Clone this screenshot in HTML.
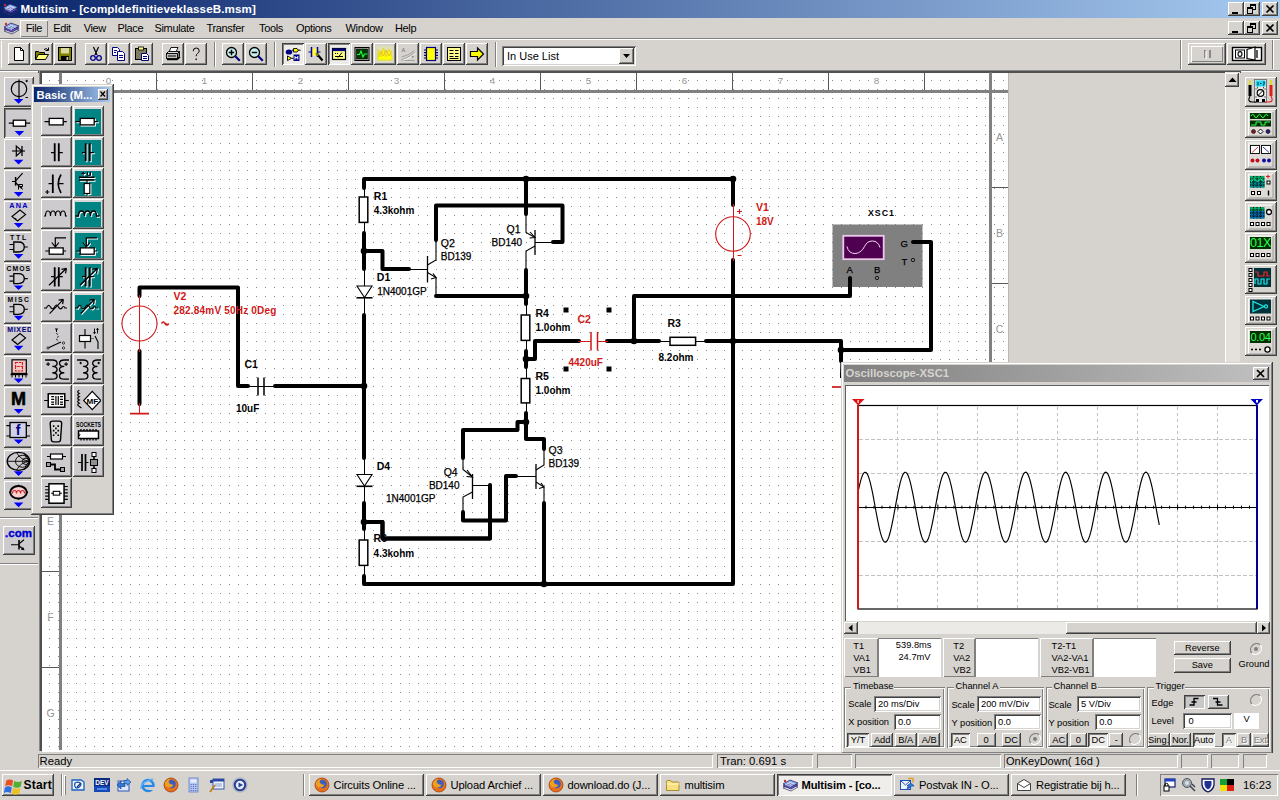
<!DOCTYPE html>
<html lang="nl"><head><meta charset="utf-8"><title>Multisim - [compldefinitieveklasseB.msm]</title>
<style>
html,body{margin:0;padding:0;}
body{width:1280px;height:800px;overflow:hidden;position:relative;background:#d6d3ce;
font-family:"Liberation Sans",sans-serif;font-size:11px;color:#000;}
div,svg{position:absolute;box-sizing:border-box;}
svg{overflow:hidden;}
.t{white-space:nowrap;}
</style></head>
<body>
<div style="left:38px;top:70px;width:1203px;height:684px;background:#d6d3ce;"></div>
<div style="left:38px;top:69.5px;width:1203px;height:3px;background:linear-gradient(#8a8a8a 0,#8a8a8a 33%,#505050 33%,#505050 100%);"></div>
<div style="left:38.7px;top:70.5px;width:3px;height:680px;background:linear-gradient(to right,#8a8a8a 0,#8a8a8a 33%,#505050 33%,#505050 100%);"></div>
<div style="left:41.5px;top:72.5px;width:967px;height:678px;background:#fff;"></div>
<div style="left:1008px;top:72.5px;width:1px;height:678px;background:#b8b8b8;"></div>
<div style="left:41.5px;top:750px;width:1199px;height:2px;background:#fff;"></div>
<svg style="left:0;top:0" width="1280" height="800" viewBox="0 0 1280 800"><defs><pattern id="gd" x="4" y="8" width="9" height="9" patternUnits="userSpaceOnUse"><rect width="1" height="1" fill="#8a8a8a"/></pattern><clipPath id="cv"><rect x="41.5" y="72.5" width="966.5" height="677.500"/></clipPath></defs><g clip-path="url(#cv)" shape-rendering="crispEdges"><rect x="41" y="72" width="968" height="679" fill="url(#gd)"/><rect x="41" y="90" width="968" height="2.600" fill="#808080"/><rect x="59" y="72" width="2.800" height="680" fill="#808080"/><rect x="989" y="72" width="2.800" height="680" fill="#808080"/><rect x="156" y="73" width="1" height="17" fill="#585858"/><rect x="252" y="73" width="1" height="17" fill="#585858"/><rect x="348" y="73" width="1" height="17" fill="#585858"/><rect x="444" y="73" width="1" height="17" fill="#585858"/><rect x="540" y="73" width="1" height="17" fill="#585858"/><rect x="636" y="73" width="1" height="17" fill="#585858"/><rect x="732" y="73" width="1" height="17" fill="#585858"/><rect x="828" y="73" width="1" height="17" fill="#585858"/><rect x="924" y="73" width="1" height="17" fill="#585858"/><rect x="42" y="187" width="17" height="1" fill="#585858"/><rect x="992" y="187" width="16" height="1" fill="#585858"/><rect x="42" y="283" width="17" height="1" fill="#585858"/><rect x="992" y="283" width="16" height="1" fill="#585858"/><rect x="42" y="379" width="17" height="1" fill="#585858"/><rect x="992" y="379" width="16" height="1" fill="#585858"/><rect x="42" y="475" width="17" height="1" fill="#585858"/><rect x="992" y="475" width="16" height="1" fill="#585858"/><rect x="42" y="571" width="17" height="1" fill="#585858"/><rect x="992" y="571" width="16" height="1" fill="#585858"/><rect x="42" y="667" width="17" height="1" fill="#585858"/><rect x="992" y="667" width="16" height="1" fill="#585858"/><rect x="42" y="763" width="17" height="1" fill="#585858"/><rect x="992" y="763" width="16" height="1" fill="#585858"/></g><g font-family="Liberation Sans,sans-serif" font-size="9.800" fill="#969696" text-anchor="middle"><text x="108.5" y="83.600">0</text><text x="204.5" y="83.600">1</text><text x="300.5" y="83.600">2</text><text x="396.5" y="83.600">3</text><text x="492.5" y="83.600">4</text><text x="588.5" y="83.600">5</text><text x="684.5" y="83.600">6</text><text x="780.5" y="83.600">7</text><text x="876.5" y="83.600">8</text></g><g font-family="Liberation Sans,sans-serif" font-size="10.500" fill="#969696" text-anchor="middle"><text x="50.500" y="140.8">A</text><text x="999.500" y="140.8">A</text><text x="50.500" y="236.8">B</text><text x="999.500" y="236.8">B</text><text x="50.500" y="332.8">C</text><text x="999.500" y="332.8">C</text><text x="50.500" y="428.8">D</text><text x="999.500" y="428.8">D</text><text x="50.500" y="524.8">E</text><text x="999.500" y="524.8">E</text><text x="50.500" y="620.8">F</text><text x="999.500" y="620.8">F</text><text x="50.500" y="716.8">G</text><text x="999.500" y="716.8">G</text></g><g clip-path="url(#cv)"><rect x="832.500" y="224.500" width="90" height="62.500" fill="#808080"/><rect x="843.300" y="235.800" width="40.400" height="23.400" fill="#500050" stroke="#ecc8ec" stroke-width="1.800"/><path d="M847 246.500 q1.500 7.500 9 7 q5.500 -1 8.500 -7 q2.500 -5.500 8 -5.500 q5.500 0 7.500 6.500" fill="none" stroke="#f0d8f0" stroke-width="1"/><circle cx="913" cy="260" r="1.700" fill="none" stroke="#000" stroke-width=".800"/><circle cx="877" cy="278" r="1.700" fill="none" stroke="#000" stroke-width=".800"/><path d="M364 186 L364 234" fill="none" stroke="#000" stroke-width="1" shape-rendering="crispEdges"/><path d="M364 268 L364 316" fill="none" stroke="#000" stroke-width="1" shape-rendering="crispEdges"/><path d="M364 457 L364 504" fill="none" stroke="#000" stroke-width="1" shape-rendering="crispEdges"/><path d="M364 528 L364 577" fill="none" stroke="#000" stroke-width="1" shape-rendering="crispEdges"/><path d="M526 303 L526 352" fill="none" stroke="#000" stroke-width="1" shape-rendering="crispEdges"/><path d="M526 366 L526 414" fill="none" stroke="#000" stroke-width="1" shape-rendering="crispEdges"/><path d="M246 386 L276 386" fill="none" stroke="#000" stroke-width="1" shape-rendering="crispEdges"/><path d="M658 341 L707 341" fill="none" stroke="#000" stroke-width="1" shape-rendering="crispEdges"/><path d="M408 269 L427.5 269" fill="none" stroke="#000" stroke-width="1" shape-rendering="crispEdges"/><path d="M552.5 242 L535 242" fill="none" stroke="#000" stroke-width="1" shape-rendering="crispEdges"/><path d="M515.5 476 L536 476" fill="none" stroke="#000" stroke-width="1" shape-rendering="crispEdges"/><path d="M472.5 485 L490 485" fill="none" stroke="#000" stroke-width="1" shape-rendering="crispEdges"/><path d="M841 360 L840.5 378" fill="none" stroke="#000" stroke-width="1.1"/><g><path d="M139.5 296 L139.5 287.5 L238 287.5 L238 386 L248 386" fill="none" stroke="#000" stroke-width="4" stroke-linejoin="round" stroke-linecap="round"/><path d="M139.5 351 L139.5 404" fill="none" stroke="#000" stroke-width="4" stroke-linejoin="round" stroke-linecap="round"/><path d="M275 386 L364 386" fill="none" stroke="#000" stroke-width="4" stroke-linejoin="round" stroke-linecap="round"/><path d="M364 188 L364 179 L733 179 L733 205" fill="none" stroke="#000" stroke-width="4" stroke-linejoin="round" stroke-linecap="round"/><path d="M364 233 L364 269" fill="none" stroke="#000" stroke-width="4" stroke-linejoin="round" stroke-linecap="round"/><path d="M364 315 L364 458" fill="none" stroke="#000" stroke-width="4" stroke-linejoin="round" stroke-linecap="round"/><path d="M364 503 L364 529" fill="none" stroke="#000" stroke-width="4" stroke-linejoin="round" stroke-linecap="round"/><path d="M364 576 L364 584 L733 584 L733 260" fill="none" stroke="#000" stroke-width="4" stroke-linejoin="round" stroke-linecap="round"/><path d="M364 251 L382.5 251 L382.5 269 L409 269" fill="none" stroke="#000" stroke-width="4" stroke-linejoin="round" stroke-linecap="round"/><path d="M436 240 L436 205.5 L562.5 205.5 L562.5 242 L553 242" fill="none" stroke="#000" stroke-width="4" stroke-linejoin="round" stroke-linecap="round"/><path d="M436 296 L526 296" fill="none" stroke="#000" stroke-width="4" stroke-linejoin="round" stroke-linecap="round"/><path d="M526 179 L526 214" fill="none" stroke="#000" stroke-width="4" stroke-linejoin="round" stroke-linecap="round"/><path d="M526 270 L526 304" fill="none" stroke="#000" stroke-width="4" stroke-linejoin="round" stroke-linecap="round"/><path d="M526 351 L526 367" fill="none" stroke="#000" stroke-width="4" stroke-linejoin="round" stroke-linecap="round"/><path d="M526 359 L535 359 L535 341 L579 341" fill="none" stroke="#000" stroke-width="4" stroke-linejoin="round" stroke-linecap="round"/><path d="M607 341 L659 341" fill="none" stroke="#000" stroke-width="4" stroke-linejoin="round" stroke-linecap="round"/><path d="M706 341 L841 341 L841 361" fill="none" stroke="#000" stroke-width="4" stroke-linejoin="round" stroke-linecap="round"/><path d="M634 341 L634 296 L850 296 L850 278" fill="none" stroke="#000" stroke-width="4" stroke-linejoin="round" stroke-linecap="round"/><path d="M913 242 L931 242 L931 350 L841 350" fill="none" stroke="#000" stroke-width="4" stroke-linejoin="round" stroke-linecap="round"/><path d="M526 413 L526 422" fill="none" stroke="#000" stroke-width="4" stroke-linejoin="round" stroke-linecap="round"/><path d="M526 422 L517.5 422 L517.5 430 L463 430 L463 458" fill="none" stroke="#000" stroke-width="4" stroke-linejoin="round" stroke-linecap="round"/><path d="M526 422 L526 439 L544 439 L544 449" fill="none" stroke="#000" stroke-width="4" stroke-linejoin="round" stroke-linecap="round"/><path d="M544 503 L544 584" fill="none" stroke="#000" stroke-width="4" stroke-linejoin="round" stroke-linecap="round"/><path d="M463 512 L463 520.5 L506 520.5 L506 476 L516 476" fill="none" stroke="#000" stroke-width="4" stroke-linejoin="round" stroke-linecap="round"/><path d="M490 485 L490 538.5 L382.5 538.5 L382.5 522 L364 522" fill="none" stroke="#000" stroke-width="4" stroke-linejoin="round" stroke-linecap="round"/></g><circle cx="364" cy="251" r="3.300" fill="#000"/><circle cx="364" cy="386" r="3.300" fill="#000"/><circle cx="364" cy="522" r="3.300" fill="#000"/><circle cx="526" cy="179" r="3.300" fill="#000"/><circle cx="526" cy="296" r="3.300" fill="#000"/><circle cx="526" cy="359" r="3.300" fill="#000"/><circle cx="526" cy="422" r="3.300" fill="#000"/><circle cx="634" cy="341" r="3.300" fill="#000"/><circle cx="733" cy="179" r="3.300" fill="#000"/><circle cx="733" cy="341" r="3.300" fill="#000"/><circle cx="544" cy="584" r="3.300" fill="#000"/><circle cx="841" cy="350" r="3.300" fill="#000"/><rect x="359.2" y="197" width="8.600" height="25.4" fill="#fff" stroke="#000" stroke-width="1.500"/><rect x="359.2" y="540" width="8.600" height="25.4" fill="#fff" stroke="#000" stroke-width="1.500"/><rect x="521.2" y="315" width="8.600" height="25.4" fill="#fff" stroke="#000" stroke-width="1.500"/><rect x="521.2" y="378.5" width="8.600" height="24.4" fill="#fff" stroke="#000" stroke-width="1.500"/><rect x="670" y="337.300" width="25.600" height="8" fill="#fff" stroke="#000" stroke-width="1.500"/><path d="M357 286 h15 l-7.500 11.500z" fill="#fff" stroke="#000" stroke-width="1.100"/><path d="M356.500 297.8 h16" stroke="#000" stroke-width="1.600"/><path d="M357 474.5 h15 l-7.500 11.500z" fill="#fff" stroke="#000" stroke-width="1.100"/><path d="M356.500 486.3 h16" stroke="#000" stroke-width="1.600"/><path d="M258 377.500 v18 M264 377.500 v18" stroke="#000" stroke-width="1.500"/><path d="M578 341 L591 341" fill="none" stroke="#d01818" stroke-width="1" shape-rendering="crispEdges"/><path d="M597 341 L608 341" fill="none" stroke="#d01818" stroke-width="1" shape-rendering="crispEdges"/><path d="M591 332 v18.500 M597.500 332 v18.500" stroke="#d01818" stroke-width="1.500"/><rect x="563.5" y="307.5" width="5" height="5" fill="#000"/><rect x="606.5" y="307.5" width="5" height="5" fill="#000"/><rect x="563.5" y="366.5" width="5" height="5" fill="#000"/><rect x="606.5" y="366.5" width="5" height="5" fill="#000"/><path d="M427.500 256 v26.500" stroke="#000" stroke-width="1.300"/><path d="M427.5 265 L436 260 L436 240" fill="none" stroke="#000" stroke-width="1.1"/><path d="M427.5 272.5 L436 277.5 L436 296" fill="none" stroke="#000" stroke-width="1.1"/><path d="M431 279 L436 277.5 L433 273.5" fill="none" stroke="#000" stroke-width="1.1"/><path d="M535 230 v25" stroke="#000" stroke-width="1.300"/><path d="M526 213 L526 232.5 L535 237.5" fill="none" stroke="#000" stroke-width="1.1"/><path d="M535 246 L526 251 L526 271" fill="none" stroke="#000" stroke-width="1.1"/><path d="M530 232 L535 237.5 L529.5 238" fill="none" stroke="#000" stroke-width="1.1"/><path d="M536 464 v25" stroke="#000" stroke-width="1.300"/><path d="M544 448 L544 465 L536 470" fill="none" stroke="#000" stroke-width="1.1"/><path d="M536 482 L544 487 L544 504" fill="none" stroke="#000" stroke-width="1.1"/><path d="M539 488.5 L544 487 L541 483" fill="none" stroke="#000" stroke-width="1.1"/><path d="M472.500 474 v25" stroke="#000" stroke-width="1.300"/><path d="M463 457 L463 469.5 L472.5 477" fill="none" stroke="#000" stroke-width="1.1"/><path d="M472.5 492 L463 497 L463 513" fill="none" stroke="#000" stroke-width="1.1"/><path d="M467 470 L472.5 477 L466.5 476.5" fill="none" stroke="#000" stroke-width="1.1"/><circle cx="139.500" cy="323.500" r="17.500" fill="none" stroke="#d01818" stroke-width="1.100"/><path d="M139.5 295 L139.5 352" fill="none" stroke="#d01818" stroke-width="1" shape-rendering="crispEdges"/><path d="M139.5 403 L139.5 413.5" fill="none" stroke="#d01818" stroke-width="1" shape-rendering="crispEdges"/><path d="M130 413.700 h19" stroke="#d01818" stroke-width="1.700"/><path d="M161.500 323.500 q1.800 -3 3.600 0 q1.800 3 3.600 0" fill="none" stroke="#d01818" stroke-width="1.500"/><circle cx="733" cy="234" r="17.300" fill="none" stroke="#d01818" stroke-width="1.100"/><path d="M733 204 L733 261" fill="none" stroke="#d01818" stroke-width="1" shape-rendering="crispEdges"/><path d="M737 211.500 h5 M739.500 209 v5 M737.500 255.500 h4" stroke="#d01818" stroke-width="1.100"/><path d="M832 387 h9" stroke="#d01818" stroke-width="1.700"/><g font-family="Liberation Sans,sans-serif" font-weight="bold"><text x="373.8" y="199.96" font-size="10.5" fill="#000">R1</text><text x="373.8" y="214.38" font-size="10" fill="#000">4.3kohm</text><text x="376.8" y="280.96" font-size="10.5" fill="#000">D1</text><text x="377.2" y="295.18" font-size="10" fill="#000" font-weight="normal" stroke="#000" stroke-width=".250">1N4001GP</text><text x="440.8" y="247.26" font-size="10.5" fill="#000" font-weight="normal" stroke="#000" stroke-width=".250">Q2</text><text x="440.8" y="259.98" font-size="10" fill="#000" font-weight="normal" stroke="#000" stroke-width=".250">BD139</text><text x="506.5" y="233.06" font-size="10.5" fill="#000" font-weight="normal" stroke="#000" stroke-width=".250">Q1</text><text x="491.5" y="246.38" font-size="10" fill="#000" font-weight="normal" stroke="#000" stroke-width=".250">BD140</text><text x="535.5" y="317.06" font-size="10.5" fill="#000">R4</text><text x="535.5" y="331.08" font-size="10" fill="#000">1.0ohm</text><text x="535.5" y="379.76" font-size="10.5" fill="#000">R5</text><text x="535.5" y="394.08" font-size="10" fill="#000">1.0ohm</text><text x="667.5" y="326.76" font-size="10.5" fill="#000">R3</text><text x="658.5" y="361.08" font-size="10" fill="#000">8.2ohm</text><text x="244.5" y="368.26" font-size="10.5" fill="#000">C1</text><text x="236" y="411.58" font-size="10" fill="#000">10uF</text><text x="577.5" y="323.26" font-size="10.5" fill="#d01818">C2</text><text x="568.5" y="366.08" font-size="10" fill="#d01818">4420uF</text><text x="173.5" y="300.26" font-size="10.5" fill="#d01818">V2</text><text x="173.5" y="314.08" font-size="10" fill="#d01818" letter-spacing="0.2">282.84mV 50Hz 0Deg</text><text x="756" y="211.26" font-size="10.5" fill="#d01818">V1</text><text x="756" y="224.58" font-size="10" fill="#d01818">18V</text><text x="376.7" y="469.96" font-size="10.5" fill="#000">D4</text><text x="386" y="502.18" font-size="10" fill="#000" font-weight="normal" stroke="#000" stroke-width=".250">1N4001GP</text><text x="443.7" y="476.36" font-size="10.5" fill="#000" font-weight="normal" stroke="#000" stroke-width=".250">Q4</text><text x="428.9" y="489.38" font-size="10" fill="#000" font-weight="normal" stroke="#000" stroke-width=".250">BD140</text><text x="548.6" y="454.16" font-size="10.5" fill="#000" font-weight="normal" stroke="#000" stroke-width=".250">Q3</text><text x="548.6" y="467.48" font-size="10" fill="#000" font-weight="normal" stroke="#000" stroke-width=".250">BD139</text><text x="373.6" y="541.76" font-size="10.5" fill="#000">R6</text><text x="373.6" y="556.58" font-size="10" fill="#000">4.3kohm</text><text x="868" y="215.65" font-size="8.8" fill="#000" letter-spacing="1">XSC1</text><text x="900.5" y="246.7" font-size="9.5" fill="#000" font-weight="normal" stroke="#000" stroke-width=".250">G</text><text x="901.5" y="265.4" font-size="9.5" fill="#000" font-weight="normal" stroke="#000" stroke-width=".250">T</text><text x="846.5" y="273.4" font-size="9.5" fill="#000" font-weight="normal" stroke="#000" stroke-width=".250">A</text><text x="874" y="273.4" font-size="9.5" fill="#000" font-weight="normal" stroke="#000" stroke-width=".250">B</text></g><path d="M490 538.5 L382.5 538.5 L382.5 522" fill="none" stroke="#000" stroke-width="4" stroke-linejoin="round" stroke-linecap="round"/></g></svg>
<div style="left:1224.5px;top:72px;width:15px;height:290px;background:#e4e1dc;box-shadow:inset 1px 0 0 #fff;"></div>
<div style="left:1224.5px;top:72.5px;width:14.5px;height:14px;background:#d6d3ce;box-shadow:inset -1px -1px 0 #404040,inset 1px 1px 0 #ffffff,inset -2px -2px 0 #808080;"><svg style="left:0px;top:0px;" width="15" height="14" viewBox="0 0 15 14"><path d="M3.500 9 h8 l-4 -4.500z" fill="#000"/></svg>
</div>
<div style="left:0px;top:0px;width:1280px;height:18px;background:linear-gradient(to right,#0a246a,#a6caf0);"></div>
<svg style="left:2px;top:1px;" width="17" height="16" viewBox="0 0 17 16"><path d="M1 9 L8 5 L16 8 L9 12z" fill="#6a5acd" stroke="#1a1a60" stroke-width=".7"/><path d="M1 7 L8 3 L16 6 L9 10z" fill="#8fa8e8" stroke="#1a1a60" stroke-width=".7"/><path d="M1 11 L8 7 L16 10 L9 14z" fill="none" stroke="#303070" stroke-width=".7"/><path d="M3 7.5 L9 9.6 M5 6.2 L11 8.4 M7 5 L13 7.2" stroke="#fff" stroke-width=".6"/><circle cx="3" cy="4" r="1.2" fill="#c03030"/></svg>
<div class="t" style="left:20.5px;top:1px;font-size:11.6px;line-height:16px;color:#fff;font-weight:bold;letter-spacing:0.12px;">Multisim - [compldefinitieveklasseB.msm]</div>
<div style="left:1228px;top:2px;width:16px;height:14px;background:#d6d3ce;box-shadow:inset -1px -1px 0 #404040,inset 1px 1px 0 #ffffff,inset -2px -2px 0 #808080;"><svg style="left:0px;top:0px;" width="16" height="14" viewBox="0 0 16 14"><rect x="4" y="10" width="6" height="2" fill="#000"/></svg>
</div>
<div style="left:1244px;top:2px;width:16px;height:14px;background:#d6d3ce;box-shadow:inset -1px -1px 0 #404040,inset 1px 1px 0 #ffffff,inset -2px -2px 0 #808080;"><svg style="left:0px;top:0px;" width="16" height="14" viewBox="0 0 16 14"><rect x="6.500" y="2.500" width="5" height="5" fill="none" stroke="#000"/><rect x="6" y="2" width="6" height="2" fill="#000"/><rect x="3.500" y="5.500" width="5" height="6" fill="#d6d3ce" stroke="#000"/><rect x="3" y="5" width="6" height="2" fill="#000"/></svg>
</div>
<div style="left:1262px;top:2px;width:16px;height:14px;background:#d6d3ce;box-shadow:inset -1px -1px 0 #404040,inset 1px 1px 0 #ffffff,inset -2px -2px 0 #808080;"><svg style="left:0px;top:0px;" width="16" height="14" viewBox="0 0 16 14"><path d="M4.500 3.500 L11.500 10.500 M11.500 3.500 L4.500 10.500" stroke="#000" stroke-width="1.700" fill="none"/></svg>
</div>
<div style="left:0px;top:18px;width:1280px;height:20px;background:#d6d3ce;"></div>
<svg style="left:3px;top:20px;" width="17" height="16" viewBox="0 0 17 16"><path d="M1 9 L8 5 L16 8 L9 12z" fill="#6a5acd" stroke="#1a1a60" stroke-width=".7"/><path d="M1 7 L8 3 L16 6 L9 10z" fill="#8fa8e8" stroke="#1a1a60" stroke-width=".7"/><path d="M1 11 L8 7 L16 10 L9 14z" fill="none" stroke="#303070" stroke-width=".7"/><path d="M3 7.5 L9 9.6 M5 6.2 L11 8.4 M7 5 L13 7.2" stroke="#fff" stroke-width=".6"/><circle cx="3" cy="4" r="1.2" fill="#c03030"/></svg>
<div style="left:20px;top:19.5px;width:27.5px;height:17px;box-shadow:inset 1px 1px 0 #fff,inset -1px -1px 0 #808080;"></div>
<div class="t" style="left:25.7px;top:19.6px;font-size:11px;line-height:16px;color:#000;letter-spacing:-0.35px;">File</div>
<div class="t" style="left:53.2px;top:19.6px;font-size:11px;line-height:16px;color:#000;letter-spacing:-0.35px;">Edit</div>
<div class="t" style="left:83.7px;top:19.6px;font-size:11px;line-height:16px;color:#000;letter-spacing:-0.35px;">View</div>
<div class="t" style="left:117.5px;top:19.6px;font-size:11px;line-height:16px;color:#000;letter-spacing:-0.35px;">Place</div>
<div class="t" style="left:154.5px;top:19.6px;font-size:11px;line-height:16px;color:#000;letter-spacing:-0.35px;">Simulate</div>
<div class="t" style="left:206.5px;top:19.6px;font-size:11px;line-height:16px;color:#000;letter-spacing:-0.35px;">Transfer</div>
<div class="t" style="left:259px;top:19.6px;font-size:11px;line-height:16px;color:#000;letter-spacing:-0.35px;">Tools</div>
<div class="t" style="left:296px;top:19.6px;font-size:11px;line-height:16px;color:#000;letter-spacing:-0.35px;">Options</div>
<div class="t" style="left:345.5px;top:19.6px;font-size:11px;line-height:16px;color:#000;letter-spacing:-0.35px;">Window</div>
<div class="t" style="left:395px;top:19.6px;font-size:11px;line-height:16px;color:#000;letter-spacing:-0.35px;">Help</div>
<div style="left:1228px;top:20.5px;width:16px;height:14px;background:#d6d3ce;box-shadow:inset -1px -1px 0 #404040,inset 1px 1px 0 #ffffff,inset -2px -2px 0 #808080;"><svg style="left:0px;top:0px;" width="16" height="14" viewBox="0 0 16 14"><rect x="4" y="10" width="6" height="2" fill="#000"/></svg>
</div>
<div style="left:1244px;top:20.5px;width:16px;height:14px;background:#d6d3ce;box-shadow:inset -1px -1px 0 #404040,inset 1px 1px 0 #ffffff,inset -2px -2px 0 #808080;"><svg style="left:0px;top:0px;" width="16" height="14" viewBox="0 0 16 14"><rect x="6.500" y="2.500" width="5" height="5" fill="none" stroke="#000"/><rect x="6" y="2" width="6" height="2" fill="#000"/><rect x="3.500" y="5.500" width="5" height="6" fill="#d6d3ce" stroke="#000"/><rect x="3" y="5" width="6" height="2" fill="#000"/></svg>
</div>
<div style="left:1262px;top:20.5px;width:16px;height:14px;background:#d6d3ce;box-shadow:inset -1px -1px 0 #404040,inset 1px 1px 0 #ffffff,inset -2px -2px 0 #808080;"><svg style="left:0px;top:0px;" width="16" height="14" viewBox="0 0 16 14"><path d="M4.500 3.500 L11.500 10.500 M11.500 3.500 L4.500 10.500" stroke="#000" stroke-width="1.700" fill="none"/></svg>
</div>
<div style="left:0px;top:38px;width:1280px;height:32px;background:#d6d3ce;box-shadow:inset 0 1px 0 #808080,inset 0 2px 0 #ffffff;"></div>
<div style="left:1px;top:41px;width:1px;height:27px;background:#fff;"></div>
<div style="left:7.5px;top:43px;width:22px;height:21.5px;background:#d6d3ce;box-shadow:inset -1px -1px 0 #404040,inset 1px 1px 0 #ffffff,inset -2px -2px 0 #808080;"><svg style="left:3px;top:3px;" width="16" height="16" viewBox="0 0 16 16"><path d="M3.5 1.5 h6 l3 3 v10 h-9z" fill="#fff" stroke="#000"/><path d="M9.5 1.5 v3 h3" fill="none" stroke="#000"/></svg>
</div>
<div style="left:30.5px;top:43px;width:22px;height:21.5px;background:#d6d3ce;box-shadow:inset -1px -1px 0 #404040,inset 1px 1px 0 #ffffff,inset -2px -2px 0 #808080;"><svg style="left:3px;top:3px;" width="16" height="16" viewBox="0 0 16 16"><path d="M1.5 13.5 v-8 h3 l1 1 h5 v2" fill="#808000" stroke="#000"/><path d="M1.5 13.5 l3 -5 h10 l-3 5z" fill="#ffff80" stroke="#000"/><path d="M10 3.5 q2.5 -2 4 .5 M14.5 1.5 v3 h-3" fill="none" stroke="#000"/></svg>
</div>
<div style="left:53.5px;top:43px;width:22px;height:21.5px;background:#d6d3ce;box-shadow:inset -1px -1px 0 #404040,inset 1px 1px 0 #ffffff,inset -2px -2px 0 #808080;"><svg style="left:3px;top:3px;" width="16" height="16" viewBox="0 0 16 16"><rect x="1.5" y="1.5" width="13" height="13" fill="#808000" stroke="#000"/><rect x="4" y="2" width="8" height="5.5" fill="#d8d8a0"/><rect x="4" y="10" width="8" height="4.5" fill="#000"/><rect x="9.5" y="11" width="1.8" height="3" fill="#c0c0c0"/></svg>
</div>
<div style="left:84.5px;top:43px;width:22px;height:21.5px;background:#d6d3ce;box-shadow:inset -1px -1px 0 #404040,inset 1px 1px 0 #ffffff,inset -2px -2px 0 #808080;"><svg style="left:3px;top:3px;" width="16" height="16" viewBox="0 0 16 16"><path d="M5.5 1 L9 9 M10.5 1 L7 9" stroke="#000" stroke-width="1.2" fill="none"/><circle cx="5" cy="12" r="2.3" fill="none" stroke="#000090" stroke-width="1.3"/><circle cx="11" cy="12" r="2.3" fill="none" stroke="#000090" stroke-width="1.3"/></svg>
</div>
<div style="left:107.5px;top:43px;width:22px;height:21.5px;background:#d6d3ce;box-shadow:inset -1px -1px 0 #404040,inset 1px 1px 0 #ffffff,inset -2px -2px 0 #808080;"><svg style="left:3px;top:3px;" width="16" height="16" viewBox="0 0 16 16"><path d="M1.5 1.5 h5 l2 2 v6 h-7z" fill="#fff" stroke="#000080"/><path d="M6.5 5.5 h5 l2 2 v7 h-7z" fill="#fff" stroke="#000080"/><path d="M3 4.5 h3 M3 6.5 h2 M8 9.5 h4 M8 11.5 h4" stroke="#000080"/></svg>
</div>
<div style="left:130.5px;top:43px;width:22px;height:21.5px;background:#d6d3ce;box-shadow:inset -1px -1px 0 #404040,inset 1px 1px 0 #ffffff,inset -2px -2px 0 #808080;"><svg style="left:3px;top:3px;" width="16" height="16" viewBox="0 0 16 16"><rect x="1.5" y="2.5" width="11" height="11" fill="#808060" stroke="#000"/><rect x="4.5" y="1" width="5" height="3" fill="#ffff80" stroke="#000" stroke-width=".8"/><path d="M7.5 7.5 h5 l2 2 v5 h-7z" fill="#fff" stroke="#000080"/><path d="M9 10.5 h4 M9 12.5 h4" stroke="#000080"/></svg>
</div>
<div style="left:161.5px;top:43px;width:22px;height:21.5px;background:#d6d3ce;box-shadow:inset -1px -1px 0 #404040,inset 1px 1px 0 #ffffff,inset -2px -2px 0 #808080;"><svg style="left:3px;top:3px;" width="16" height="16" viewBox="0 0 16 16"><path d="M2 13.500 h10 l3 -2.500" fill="none" stroke="#000" stroke-width="1.600"/><path d="M4 6 l2 -4.5 h7 l-2 4.5z" fill="#fff" stroke="#000" stroke-width=".9"/><path d="M1.5 7.5 l2 -2 h11 l-2 2z" fill="#e0e0e0" stroke="#000" stroke-width=".9"/><rect x="1.5" y="7.5" width="11" height="5" fill="#c0c0c0" stroke="#000" stroke-width=".9"/><path d="M12.5 7.5 l2 -2 v5 l-2 2z" fill="#808080" stroke="#000" stroke-width=".9"/><path d="M3 10 h8" stroke="#000"/></svg>
</div>
<div style="left:184.5px;top:43px;width:22px;height:21.5px;background:#d6d3ce;box-shadow:inset -1px -1px 0 #404040,inset 1px 1px 0 #ffffff,inset -2px -2px 0 #808080;"><svg style="left:3px;top:3px;" width="16" height="16" viewBox="0 0 16 16"><path d="M5.2 5.2 q0 -3.2 3 -3.2 q3 0 3 2.8 q0 1.8 -1.8 2.8 q-1.2 .8 -1.2 2.6" fill="none" stroke="#000" stroke-width="1"/><rect x="7.500" y="12.500" width="1.300" height="1.500" fill="#000"/></svg>
</div>
<div style="left:221.5px;top:43px;width:22px;height:21.5px;background:#d6d3ce;box-shadow:inset -1px -1px 0 #404040,inset 1px 1px 0 #ffffff,inset -2px -2px 0 #808080;"><svg style="left:3px;top:3px;" width="16" height="16" viewBox="0 0 16 16"><circle cx="6.500" cy="6.500" r="5" fill="#c8f0f0" stroke="#000" stroke-width="1.300"/><path d="M3.8 6.5 h5.4 M6.5 3.8 v5.4" stroke="#000" stroke-width="1.5"/><path d="M10.3 10.3 l4.5 4.5" stroke="#000080" stroke-width="2.2"/></svg>
</div>
<div style="left:244.5px;top:43px;width:22px;height:21.5px;background:#d6d3ce;box-shadow:inset -1px -1px 0 #404040,inset 1px 1px 0 #ffffff,inset -2px -2px 0 #808080;"><svg style="left:3px;top:3px;" width="16" height="16" viewBox="0 0 16 16"><circle cx="6.500" cy="6.500" r="5" fill="#c8f0f0" stroke="#000" stroke-width="1.300"/><path d="M3.8 6.5 h5.4" stroke="#000" stroke-width="1.5"/><path d="M10.3 10.3 l4.5 4.5" stroke="#000080" stroke-width="2.2"/></svg>
</div>
<div style="left:213.5px;top:42px;width:2px;height:25px;box-shadow:inset 1px 0 0 #808080,inset -1px 0 0 #fff;"></div>
<div style="left:273.5px;top:42px;width:2px;height:25px;box-shadow:inset 1px 0 0 #808080,inset -1px 0 0 #fff;"></div>
<div style="left:494.5px;top:42px;width:2px;height:25px;box-shadow:inset 1px 0 0 #808080,inset -1px 0 0 #fff;"></div>
<div style="left:281.5px;top:43px;width:22px;height:21.5px;background:#eeece8;box-shadow:inset 1px 1px 0 #404040,inset -1px -1px 0 #ffffff,inset 2px 2px 0 #808080;"><svg style="left:3px;top:3px;" width="16" height="16" viewBox="0 0 16 16"><ellipse cx="4" cy="6" rx="3.3" ry="2.6" fill="#000080"/><path d="M8.5 2.5 h3.5 q2.5 1.7 0 3.5 h-3.5z" fill="#ffff00" stroke="#000" stroke-width=".9"/><path d="M2.5 10 l4 2.3 l-4 2.3z" fill="#ffff00" stroke="#000" stroke-width=".9"/><rect x="8.5" y="8.5" width="6" height="6.5" fill="#000080"/><path d="M10 10 v3.5 M12.8 10 v3.5 M10 11.7 h2.8" stroke="#fff"/><path d="M13 4.2 h2.5 M7 4.2 h1.5 M6.5 12.3 h2" stroke="#000"/></svg>
</div>
<div style="left:304.5px;top:43px;width:22px;height:21.5px;background:#d6d3ce;box-shadow:inset -1px -1px 0 #404040,inset 1px 1px 0 #ffffff,inset -2px -2px 0 #808080;"><svg style="left:3px;top:3px;" width="16" height="16" viewBox="0 0 16 16"><rect x="4" y="2.500" width="5" height="7" fill="#ffff40"/><path d="M3.500 1 v10 M9.500 1 v10" stroke="#0000a0" stroke-width="1.500"/><path d="M.500 6 h3 M9.500 6 h3" stroke="#0000a0" stroke-width="1.200"/><path d="M9 8 l5.5 6.5" stroke="#000" stroke-width="2.2"/><path d="M8 7 l2.2 2.6" stroke="#808000" stroke-width="2"/></svg>
</div>
<div style="left:327.5px;top:43px;width:22px;height:21.5px;background:#eeece8;box-shadow:inset 1px 1px 0 #404040,inset -1px -1px 0 #ffffff,inset 2px 2px 0 #808080;"><svg style="left:3px;top:3px;" width="16" height="16" viewBox="0 0 16 16"><rect x="1.5" y="2.5" width="13" height="11" fill="#ffff80" stroke="#000" stroke-width="1.2"/><rect x="1.5" y="2.5" width="13" height="2.6" fill="#000080"/><path d="M4 10.5 h8 M11 6.5 l-4 5" stroke="#000" stroke-width="1"/><path d="M4 7.5 h4" stroke="#000" stroke-dasharray="1 1"/></svg>
</div>
<div style="left:350.5px;top:43px;width:22px;height:21.5px;background:#d6d3ce;box-shadow:inset -1px -1px 0 #404040,inset 1px 1px 0 #ffffff,inset -2px -2px 0 #808080;"><svg style="left:3px;top:3px;" width="16" height="16" viewBox="0 0 16 16"><rect x="1" y="1.5" width="14" height="13" fill="#c0c0c0" stroke="#000"/><rect x="2.5" y="3" width="11" height="10" fill="#003800" stroke="#000" stroke-width=".6"/><path d="M3 8.5 h2.5 l1.5 -3.5 l2 6 l1.5 -3 h3" fill="none" stroke="#20ff40" stroke-width="1.1"/></svg>
</div>
<div style="left:373.5px;top:43px;width:22px;height:21.5px;background:#d6d3ce;box-shadow:inset -1px -1px 0 #404040,inset 1px 1px 0 #ffffff,inset -2px -2px 0 #808080;"><svg style="left:3px;top:3px;" width="16" height="16" viewBox="0 0 16 16"><rect x="0" y="0" width="16" height="16" fill="#e8e8a0" opacity=".6"/><path d="M1 14 V3 l3 8 l2.5 -9 l2.5 9 l3 -8 l3 8 V14z" fill="#ffff00" stroke="#d8d820" stroke-width=".8"/><path d="M1 11 l3 -6 l2.5 5 l2.5 -6 l3 6 l3 -5" fill="none" stroke="#f0c000" stroke-width="1"/></svg>
</div>
<div style="left:396.5px;top:43px;width:22px;height:21.5px;background:#d6d3ce;box-shadow:inset -1px -1px 0 #404040,inset 1px 1px 0 #ffffff,inset -2px -2px 0 #808080;"><svg style="left:3px;top:3px;" width="16" height="16" viewBox="0 0 16 16"><path d="M1.5 13.5 q5 -1 13 -7 M1.5 11 q6 -1 13 -6.5 M1.5 14.5 h13" fill="none" stroke="#a0a0a0" stroke-width="1"/><path d="M2 6 l1.5 -4 l1.5 4 M2.6 4.6 h1.8" fill="none" stroke="#909090" stroke-width=".9"/><path d="M11 10.5 h3 M12.5 9 v3" stroke="#909090" stroke-width=".9"/><path d="M2.5 14.5 q5 -1 13 -7" fill="none" stroke="#fff" stroke-width=".7"/></svg>
</div>
<div style="left:419.5px;top:43px;width:22px;height:21.5px;background:#d6d3ce;box-shadow:inset -1px -1px 0 #404040,inset 1px 1px 0 #ffffff,inset -2px -2px 0 #808080;"><svg style="left:3px;top:3px;" width="16" height="16" viewBox="0 0 16 16"><rect x="3.5" y="1.5" width="9" height="13" fill="#ffff00" stroke="#000080" stroke-width="1.2"/><path d="M1 4 h2.5 M1 6.7 h2.5 M1 9.4 h2.5 M1 12 h2.5 M12.5 4 h2.5 M12.5 6.7 h2.5 M12.5 9.4 h2.5 M12.5 12 h2.5" stroke="#000080" stroke-width="1.2"/></svg>
</div>
<div style="left:442.5px;top:43px;width:22px;height:21.5px;background:#d6d3ce;box-shadow:inset -1px -1px 0 #404040,inset 1px 1px 0 #ffffff,inset -2px -2px 0 #808080;"><svg style="left:3px;top:3px;" width="16" height="16" viewBox="0 0 16 16"><rect x="1.5" y="1.5" width="13" height="13" fill="#ffff90" stroke="#000" stroke-width="1"/><path d="M3.5 4.5 h4 M9 4.5 h3.5 M3.5 7.5 h4 M9 7.5 h3.5 M3.5 10.5 h4 M9 10.5 h3.5 M3.5 12.5 h9" stroke="#000" stroke-width="1"/></svg>
</div>
<div style="left:465.5px;top:43px;width:22px;height:21.5px;background:#d6d3ce;box-shadow:inset -1px -1px 0 #404040,inset 1px 1px 0 #ffffff,inset -2px -2px 0 #808080;"><svg style="left:3px;top:3px;" width="16" height="16" viewBox="0 0 16 16"><path d="M1.5 5.5 h7 v-3.5 l6 6 l-6 6 v-3.5 h-7z" fill="#ffff00" stroke="#000" stroke-width="1.2"/></svg>
</div>
<div style="left:502px;top:46px;width:134px;height:20px;background:#fff;box-shadow:inset 1px 1px 0 #808080,inset -1px -1px 0 #ffffff,inset 2px 2px 0 #404040,inset -2px -2px 0 #d6d3ce;"></div>
<div class="t" style="left:507px;top:48px;font-size:11px;line-height:16px;color:#000;">In Use List</div>
<div style="left:619px;top:48px;width:15px;height:16px;background:#d6d3ce;box-shadow:inset -1px -1px 0 #404040,inset 1px 1px 0 #ffffff,inset -2px -2px 0 #808080;"><svg style="left:0px;top:0px;" width="15" height="16" viewBox="0 0 15 16"><path d="M4 6 h7 l-3.5 4z" fill="#000"/></svg>
</div>
<div style="left:1180px;top:40px;width:2px;height:29px;box-shadow:inset 1px 0 0 #808080,inset -1px 0 0 #fff;"></div>
<div style="left:1272px;top:40px;width:2px;height:29px;box-shadow:inset 1px 0 0 #808080,inset -1px 0 0 #fff;"></div>
<div style="left:1188px;top:43px;width:38px;height:21.5px;background:#d6d3ce;box-shadow:inset -1px -1px 0 #404040,inset 1px 1px 0 #ffffff,inset -2px -2px 0 #808080;"><div style="left:3px;top:3px;width:32px;height:15.5px;box-shadow:inset 1px 1px 0 #fff,inset -1px -1px 0 #808080;"></div>
<svg style="left:1.5px;top:1px;" width="35" height="20" viewBox="0 0 35 20"><rect x="14" y="6" width="2" height="8" fill="#888"/><rect x="19" y="6" width="2" height="8" fill="#888"/><rect x="15" y="7" width="2" height="8" fill="#fff" opacity=".6"/></svg>
</div>
<div style="left:1227px;top:43px;width:38.5px;height:21.5px;background:#d6d3ce;box-shadow:inset -1px -1px 0 #404040,inset 1px 1px 0 #ffffff,inset -2px -2px 0 #808080;"><svg style="left:0.5px;top:1px;" width="38" height="20" viewBox="0 0 38 20"><rect x="4.5" y="3.5" width="29" height="13" fill="#fff" stroke="#000" stroke-width="1.4"/><rect x="7.5" y="6" width="9" height="8" fill="#fff" stroke="#000"/><ellipse cx="12" cy="10" rx="2" ry="2.4" fill="none" stroke="#000" stroke-width="1.1"/><path d="M19 5.5 l8 -2.5 v13 l-8 -1.5z" fill="#fff" stroke="#000" stroke-width="1.2"/><path d="M29 6 v8" stroke="#000" stroke-width="1.3"/></svg>
</div>
<div style="left:0px;top:70px;width:38px;height:698px;background:#d6d3ce;"></div>
<div style="left:0px;top:70px;width:38px;height:2px;box-shadow:inset 0 1px 0 #808080,inset 0 -1px 0 #fff;"></div>
<div style="left:3.5px;top:77px;width:30.5px;height:29.5px;background:#cecbce;box-shadow:inset -1px -1px 0 #404040,inset 1px 1px 0 #ffffff,inset -2px -2px 0 #808080;"><svg style="left:0.5px;top:0" width="30" height="29.5" viewBox="0 0 30 29.500"><circle cx="15" cy="12" r="7.700" fill="none" stroke="#000" stroke-width="1.200"/><path d="M15 2.500 v19.500" stroke="#000" stroke-width="1.200"/><path d="M21.500 4 h2.400 M22.700 2.800 v2.400 M21.500 20.500 h2.400" stroke="#000" stroke-width="1"/><path d="M9.8 22 h9.600 l-4.800 4.700z" fill="#0000ff"/></svg></div>
<div style="left:3.5px;top:108px;width:30.5px;height:29.5px;background:#cecbce;box-shadow:inset 1px 1px 0 #404040,inset -1px -1px 0 #ffffff,inset 2px 2px 0 #808080;"><svg style="left:0.5px;top:0" width="30" height="29.5" viewBox="0 0 30 29.500"><path d="M4.800 15.200 h5 M21.500 15.200 h4.700" stroke="#000" stroke-width="1.200"/><rect x="9.300" y="12.200" width="12.300" height="6" fill="#fff" stroke="#000" stroke-width="1.300"/><path d="M10.600000000000001 23 h9.600 l-4.800 4.700z" fill="#0000ff"/></svg></div>
<div style="left:3.5px;top:139.1px;width:30.5px;height:29.5px;background:#cecbce;box-shadow:inset -1px -1px 0 #404040,inset 1px 1px 0 #ffffff,inset -2px -2px 0 #808080;"><svg style="left:0.5px;top:0" width="30" height="29.5" viewBox="0 0 30 29.500"><path d="M8 12 h13" stroke="#000" stroke-width="1.100"/><path d="M12.300 7 v10 l5.600 -5z" fill="none" stroke="#000" stroke-width="1.200"/><path d="M18 7 v10" stroke="#000" stroke-width="1.300"/><path d="M9.8 20.8 h9.600 l-4.800 4.700z" fill="#0000ff"/></svg></div>
<div style="left:3.5px;top:170.1px;width:30.5px;height:29.5px;background:#cecbce;box-shadow:inset -1px -1px 0 #404040,inset 1px 1px 0 #ffffff,inset -2px -2px 0 #808080;"><svg style="left:0.5px;top:0" width="30" height="29.5" viewBox="0 0 30 29.500"><path d="M11.600 7 v8.700" stroke="#000" stroke-width="1.500"/><path d="M11.600 10.800 l7 -7.600 M11.600 12.800 l6.300 5.700 M8 11.500 h3.600" stroke="#000" stroke-width="1.200" fill="none"/><path d="M14.500 14.500 h4 v2 l-2 0 l2 3 M14.500 14.500 v5" fill="none" stroke="#000" stroke-width="1"/><path d="M9.8 22 h9.600 l-4.800 4.700z" fill="#0000ff"/></svg></div>
<div style="left:3.5px;top:201.2px;width:30.5px;height:29.5px;background:#cecbce;box-shadow:inset -1px -1px 0 #404040,inset 1px 1px 0 #ffffff,inset -2px -2px 0 #808080;"><svg style="left:0.5px;top:0" width="30" height="29.5" viewBox="0 0 30 29.500"><text x="15" y="7.2" font-family="Liberation Sans,sans-serif" font-weight="bold" font-size="7.3" letter-spacing="1.2" text-anchor="middle" fill="#0000c8">ANA</text><path d="M8 15.500 l8 -6.500 l5.600 4.500 l-8 6.500z" fill="none" stroke="#000" stroke-width="1.100"/><path d="M10.500 17.800 h1.800" stroke="#000" stroke-width="1"/><path d="M9.8 22 h9.600 l-4.800 4.700z" fill="#0000ff"/></svg></div>
<div style="left:3.5px;top:232.2px;width:30.5px;height:29.5px;background:#cecbce;box-shadow:inset -1px -1px 0 #404040,inset 1px 1px 0 #ffffff,inset -2px -2px 0 #808080;"><svg style="left:0.5px;top:0" width="30" height="29.5" viewBox="0 0 30 29.500"><text x="15" y="7.8" font-family="Liberation Sans,sans-serif" font-weight="bold" font-size="7" letter-spacing="1.8" text-anchor="middle" fill="#000">TTL</text><path d="M9.800 10 h4.500 q6 0 6 5 q0 5 -6 5 h-4.500z" fill="none" stroke="#000" stroke-width="1.300"/><path d="M5.500 12.5 h4.300 M5.500 17.5 h4.300 M20.300 15 h3.500" stroke="#000" stroke-width="1.100"/><path d="M9.8 22 h9.600 l-4.800 4.700z" fill="#0000ff"/></svg></div>
<div style="left:3.5px;top:263.2px;width:30.5px;height:29.5px;background:#cecbce;box-shadow:inset -1px -1px 0 #404040,inset 1px 1px 0 #ffffff,inset -2px -2px 0 #808080;"><svg style="left:0.5px;top:0" width="30" height="29.5" viewBox="0 0 30 29.500"><text x="14.8" y="7.9" font-family="Liberation Sans,sans-serif" font-weight="bold" font-size="6.8" letter-spacing="1.1" text-anchor="middle" fill="#000">CMOS</text><path d="M9.800 10.6 h4.500 q6 0 6 5 q0 5 -6 5 h-4.500z" fill="none" stroke="#000" stroke-width="1.300"/><path d="M5.500 13.1 h4.300 M5.500 18.1 h4.300 M20.300 15.6 h3.500" stroke="#000" stroke-width="1.100"/><path d="M9.8 22.4 h9.600 l-4.800 4.700z" fill="#0000ff"/></svg></div>
<div style="left:3.5px;top:294.3px;width:30.5px;height:29.5px;background:#cecbce;box-shadow:inset -1px -1px 0 #404040,inset 1px 1px 0 #ffffff,inset -2px -2px 0 #808080;"><svg style="left:0.5px;top:0" width="30" height="29.5" viewBox="0 0 30 29.500"><text x="15" y="7.6" font-family="Liberation Sans,sans-serif" font-weight="bold" font-size="6.8" letter-spacing="1.5" text-anchor="middle" fill="#000">MISC</text><path d="M9.800 10.3 h4.500 q6 0 6 5 q0 5 -6 5 h-4.500z" fill="none" stroke="#000" stroke-width="1.300"/><path d="M5.500 12.8 h4.300 M5.500 17.8 h4.300 M20.300 15.3 h3.500" stroke="#000" stroke-width="1.100"/><path d="M9.8 21.8 h9.600 l-4.800 4.700z" fill="#0000ff"/></svg></div>
<div style="left:3.5px;top:325.3px;width:30.5px;height:29.5px;background:#cecbce;box-shadow:inset -1px -1px 0 #404040,inset 1px 1px 0 #ffffff,inset -2px -2px 0 #808080;"><svg style="left:0.5px;top:0" width="30" height="29.5" viewBox="0 0 30 29.500"><text x="16" y="6.7" font-family="Liberation Sans,sans-serif" font-weight="bold" font-size="7" letter-spacing="0.7" text-anchor="middle" fill="#000080">MIXED</text><path d="M8 15 l8 -6.500 l5.600 4.500 l-8 6.500z" fill="none" stroke="#000" stroke-width="1.100"/><path d="M10.500 17.300 h1.800" stroke="#000" stroke-width="1"/><path d="M9.8 20.8 h9.600 l-4.800 4.700z" fill="#0000ff"/></svg></div>
<div style="left:3.5px;top:356.4px;width:30.5px;height:29.5px;background:#cecbce;box-shadow:inset -1px -1px 0 #404040,inset 1px 1px 0 #ffffff,inset -2px -2px 0 #808080;"><svg style="left:0.5px;top:0" width="30" height="29.5" viewBox="0 0 30 29.500"><rect x="8" y="3.800" width="14.300" height="13.600" fill="#f4c8c8" stroke="#000" stroke-width="1.200"/><path d="M11.500 6.500 h7 v4 h-7z M11.500 10.500 v4.500 h7 v-4.500" fill="none" stroke="#d02020" stroke-width="1.100" stroke-dasharray="2.600 .800"/><path d="M6.600 18.300 h17" stroke="#000" stroke-width="1.800"/><path d="M8 19 v2.500 M11.500 19 v2.500 M15 19 v2.500 M18.500 19 v2.500 M22 19 v2.500" stroke="#000" stroke-width="1"/><path d="M9.8 22.4 h9.600 l-4.800 4.700z" fill="#0000ff"/></svg></div>
<div style="left:3.5px;top:387.4px;width:30.5px;height:29.5px;background:#cecbce;box-shadow:inset -1px -1px 0 #404040,inset 1px 1px 0 #ffffff,inset -2px -2px 0 #808080;"><svg style="left:0.5px;top:0" width="30" height="29.5" viewBox="0 0 30 29.500"><text x="14.600" y="18" font-family="Liberation Sans,sans-serif" font-weight="bold" font-size="18" text-anchor="middle" fill="#000" stroke="#000" stroke-width=".600">M</text><path d="M9.8 22 h9.600 l-4.800 4.700z" fill="#0000ff"/></svg></div>
<div style="left:3.5px;top:418.4px;width:30.5px;height:29.5px;background:#cecbce;box-shadow:inset -1px -1px 0 #404040,inset 1px 1px 0 #ffffff,inset -2px -2px 0 #808080;"><svg style="left:0.5px;top:0" width="30" height="29.5" viewBox="0 0 30 29.500"><rect x="6" y="4.500" width="16.300" height="15" fill="#d0d0e8" stroke="#000" stroke-width="1.300"/><path d="M2.300 7.600 h3.700 M2.300 18 h3.700 M22.300 7.600 h3.700 M22.300 18 h3.700" stroke="#000" stroke-width="1.100"/><text x="14" y="16.600" font-family="Liberation Sans,sans-serif" font-weight="bold" font-size="14" text-anchor="middle" fill="#000080">f</text><path d="M9.8 21.4 h9.600 l-4.800 4.700z" fill="#0000ff"/></svg></div>
<div style="left:3.5px;top:449.5px;width:30.5px;height:29.5px;background:#cecbce;box-shadow:inset -1px -1px 0 #404040,inset 1px 1px 0 #ffffff,inset -2px -2px 0 #808080;"><svg style="left:0.5px;top:0" width="30" height="29.5" viewBox="0 0 30 29.500"><ellipse cx="14.500" cy="11.300" rx="11.300" ry="9" fill="none" stroke="#000" stroke-width="1.300"/><path d="M3.500 11.300 h22" stroke="#000" stroke-width=".900"/><ellipse cx="18.500" cy="11.300" rx="7" ry="6" fill="none" stroke="#000" stroke-width=".900"/><ellipse cx="22" cy="11.300" rx="3.600" ry="3.200" fill="none" stroke="#000" stroke-width=".900"/><path d="M25.500 11.300 q-9 -1 -13 -9 M25.500 11.300 q-9 1 -13 9 M25.500 11.300 q-4 -3 -5 -8.500 M25.500 11.300 q-4 3 -5 8.500" fill="none" stroke="#000" stroke-width=".900"/><path d="M9.8 21.2 h9.600 l-4.800 4.700z" fill="#0000ff"/></svg></div>
<div style="left:3.5px;top:480.5px;width:30.5px;height:29.5px;background:#cecbce;box-shadow:inset -1px -1px 0 #404040,inset 1px 1px 0 #ffffff,inset -2px -2px 0 #808080;"><svg style="left:0.5px;top:0" width="30" height="29.5" viewBox="0 0 30 29.500"><ellipse cx="14.500" cy="11.300" rx="8.300" ry="6.300" fill="#f8d0d0" stroke="#000" stroke-width="2"/><path d="M14.500 3.800 v1.200 M14.500 17.600 v1.200 M5 11.300 h1.200 M22.800 11.300 h1.200" stroke="#000" stroke-width="1.500"/><path d="M8.500 12.500 q0 -3 2 -3 q2 0 2 3 q0 -3 2 -3 q2 0 2 3 q0 -3 2 -3 q2 0 2 3" fill="none" stroke="#d02020" stroke-width="1.100"/><path d="M9.8 21.5 h9.600 l-4.800 4.700z" fill="#0000ff"/></svg></div>
<div style="left:0px;top:517px;width:38px;height:2px;box-shadow:inset 0 1px 0 #808080,inset 0 -1px 0 #fff;"></div>
<div style="left:3px;top:525.5px;width:31.5px;height:29.5px;background:#cecbce;box-shadow:inset -1px -1px 0 #404040,inset 1px 1px 0 #ffffff,inset -2px -2px 0 #808080;"><svg style="left:0px;top:0px;" width="31" height="29.5" viewBox="0 0 31 29.5"><text x="15.500" y="10.800" font-family="Liberation Sans,sans-serif" font-weight="bold" font-size="11.500" text-anchor="middle" fill="#0000d0" stroke="#0000d0" stroke-width=".400">.com</text><path d="M16 14 v9.500" stroke="#000" stroke-width="1.600"/><path d="M8 18.800 h8 M16 17.800 l5 -4 M16 19.800 l5 4" stroke="#000" stroke-width="1.100" fill="none"/><path d="M21.500 24.300 l-3.800 -.8 l2.400 -2.600z" fill="#000"/></svg>
</div>
<div style="left:0px;top:563px;width:38px;height:2px;box-shadow:inset 0 1px 0 #808080,inset 0 -1px 0 #fff;"></div>
<div style="left:1241px;top:70px;width:39px;height:684px;background:#d6d3ce;"></div>
<div style="left:1241px;top:70px;width:39px;height:2px;box-shadow:inset 0 1px 0 #808080,inset 0 -1px 0 #fff;"></div>
<div style="left:1245px;top:77px;width:31.5px;height:29.5px;background:#d6d3ce;box-shadow:inset -1px -1px 0 #404040,inset 1px 1px 0 #ffffff,inset -2px -2px 0 #808080;"><svg style="left:0px;top:0px;" width="31" height="29.5" viewBox="0 0 31 29.5"><rect x="9.5" y="2.5" width="12" height="23" fill="#e8e8e8" stroke="#606060" stroke-width=".8"/><rect x="10.5" y="3.5" width="10" height="6" fill="#20d8e8"/><path d="M13 5 v3.5 M15 6.5 h1.5 M18 5 h1.5 l-1 3.5" stroke="#003060" stroke-width="1" fill="none"/><circle cx="15.5" cy="16" r="3.3" fill="#fff" stroke="#000" stroke-width="1.2"/><path d="M13.5 18 l4 -4" stroke="#000"/><path d="M10.5 12 h1 M12 10.8 h1 M18 10.8 h1 M19.5 12 h1 M10.5 20 h1 M19.5 20 h1" stroke="#000" stroke-width="1"/><rect x="11" y="22" width="3" height="3" fill="#000"/><rect x="17" y="22" width="3" height="3" fill="#000"/><path d="M5 3 v5" stroke="#e0e000" stroke-width="1.6"/><rect x="3.5" y="8" width="3" height="11" fill="#000"/><path d="M5 19 q-3 6 2 6 h4" fill="none" stroke="#000" stroke-width="1.1"/><path d="M26 3 v5" stroke="#e0e000" stroke-width="1.6"/><rect x="24.5" y="8" width="3" height="11" fill="#e02020"/><path d="M26 19 q3 6 -2 6 h-4" fill="none" stroke="#e02020" stroke-width="1.1"/></svg>
</div>
<div style="left:1245px;top:108.5px;width:31.5px;height:29.5px;background:#d6d3ce;box-shadow:inset -1px -1px 0 #404040,inset 1px 1px 0 #ffffff,inset -2px -2px 0 #808080;"><svg style="left:0px;top:0px;" width="31" height="29.5" viewBox="0 0 31 29.5"><rect x="3.500" y="3" width="24.500" height="24" fill="#dedbd6"/><path d="M3.500 27 V3 H28" fill="none" stroke="#fff" stroke-width="1"/><path d="M28 3 V27 H3.500" fill="none" stroke="#9a9a9a" stroke-width="1"/><rect x="5" y="4" width="21" height="6" fill="#003000"/><path d="M6 7 q1.7 -3.5 3.4 0 q1.7 3.5 3.4 0 q1.7 -3.5 3.4 0 q1.7 3.5 3.4 0 q1.7 -3.5 3.4 0" fill="none" stroke="#30ff50" stroke-width="1"/><rect x="5" y="11.5" width="21" height="6" fill="#003000"/><path d="M6 16 h5 v-3 h5 v3 h4 v-3 h5" fill="none" stroke="#30ff50" stroke-width="1"/><circle cx="8.5" cy="22.5" r="2" fill="#802020" stroke="#000" stroke-width=".6"/><path d="M15.5 20 l2.5 2.5 l-2.5 2.5 l-2.5 -2.5z" fill="#fff" stroke="#000" stroke-width="1"/><circle cx="23" cy="22.5" r="2" fill="#202080" stroke="#000" stroke-width=".6"/></svg>
</div>
<div style="left:1245px;top:140px;width:31.5px;height:29.5px;background:#d6d3ce;box-shadow:inset -1px -1px 0 #404040,inset 1px 1px 0 #ffffff,inset -2px -2px 0 #808080;"><svg style="left:0px;top:0px;" width="31" height="29.5" viewBox="0 0 31 29.5"><rect x="3.500" y="3" width="24.500" height="24" fill="#dedbd6"/><path d="M3.500 27 V3 H28" fill="none" stroke="#fff" stroke-width="1"/><path d="M28 3 V27 H3.500" fill="none" stroke="#9a9a9a" stroke-width="1"/><rect x="5.5" y="5.5" width="9" height="8" fill="#fff" stroke="#000" stroke-width=".9"/><path d="M7 12.5 l6 -5.5" stroke="#c02020" stroke-width=".9"/><rect x="16.5" y="5.5" width="9" height="8" fill="#fff" stroke="#000" stroke-width=".9"/><path d="M18 7 l6 5.5" stroke="#2020c0" stroke-width=".9"/><circle cx="7.5" cy="20.5" r="2" fill="#c01020"/><circle cx="12.5" cy="20.5" r="2" fill="#c01020"/><circle cx="19" cy="20.5" r="2" fill="#1010a0"/><circle cx="24" cy="20.5" r="2" fill="#1010a0"/></svg>
</div>
<div style="left:1245px;top:171px;width:31.5px;height:29.5px;background:#d6d3ce;box-shadow:inset -1px -1px 0 #404040,inset 1px 1px 0 #ffffff,inset -2px -2px 0 #808080;"><svg style="left:0px;top:0px;" width="31" height="29.5" viewBox="0 0 31 29.5"><rect x="3.500" y="3" width="24.500" height="24" fill="#dedbd6"/><path d="M3.500 27 V3 H28" fill="none" stroke="#fff" stroke-width="1"/><path d="M28 3 V27 H3.500" fill="none" stroke="#9a9a9a" stroke-width="1"/><rect x="5" y="5" width="14.500" height="11.500" fill="#00a868"/><rect x="5" y="10" width="14.500" height="6.500" fill="#008488"/><path d="M5 8 h14.500 M5 11 h14.500 M5 14 h14.500 M8.500 5 v11.500 M12 5 v11.500 M15.500 5 v11.500" stroke="#000" stroke-width="1" stroke-dasharray="1.200 1"/><path d="M6 11 l3 -3.500 l3.500 3.500 l3 -3.500 l3 3" fill="none" stroke="#20e8a0" stroke-width="1"/><path d="M21 5.5 h4 M23 3.5 v4" stroke="#e02020" stroke-width="1"/><rect x="22.0" y="10.0" width="3" height="3" fill="#fff" stroke="#000" stroke-width="1"/><rect x="6.5" y="20.5" width="3" height="3" fill="#fff" stroke="#000" stroke-width="1"/><rect x="12.5" y="20.5" width="3" height="3" fill="#fff" stroke="#000" stroke-width="1"/><path d="M23.5 19.5 v5" stroke="#000" stroke-width="1.4"/></svg>
</div>
<div style="left:1245px;top:202px;width:31.5px;height:29.5px;background:#d6d3ce;box-shadow:inset -1px -1px 0 #404040,inset 1px 1px 0 #ffffff,inset -2px -2px 0 #808080;"><svg style="left:0px;top:0px;" width="31" height="29.5" viewBox="0 0 31 29.5"><rect x="3.500" y="3" width="24.500" height="24" fill="#dedbd6"/><path d="M3.500 27 V3 H28" fill="none" stroke="#fff" stroke-width="1"/><path d="M28 3 V27 H3.500" fill="none" stroke="#9a9a9a" stroke-width="1"/><rect x="5" y="5" width="14.500" height="11.500" fill="#00a868"/><rect x="5" y="9" width="14.500" height="7.500" fill="#0868a8"/><path d="M5 8 h14.500 M5 11 h14.500 M5 14 h14.500 M8.500 5 v11.500 M12 5 v11.500 M15.500 5 v11.500" stroke="#000" stroke-width="1" stroke-dasharray="1.200 1"/><circle cx="24" cy="10" r="2.5" fill="#fff" stroke="#000" stroke-width="1.3"/><rect x="5.5" y="20.5" width="3" height="3" fill="#fff" stroke="#000" stroke-width="1"/><rect x="11.0" y="20.5" width="3" height="3" fill="#fff" stroke="#000" stroke-width="1"/><rect x="16.5" y="20.5" width="3" height="3" fill="#fff" stroke="#000" stroke-width="1"/><rect x="22.0" y="20.5" width="3" height="3" fill="#fff" stroke="#000" stroke-width="1"/></svg>
</div>
<div style="left:1245px;top:233px;width:31.5px;height:29.5px;background:#d6d3ce;box-shadow:inset -1px -1px 0 #404040,inset 1px 1px 0 #ffffff,inset -2px -2px 0 #808080;"><svg style="left:0px;top:0px;" width="31" height="29.5" viewBox="0 0 31 29.5"><rect x="3.500" y="3" width="24.500" height="24" fill="#dedbd6"/><path d="M3.500 27 V3 H28" fill="none" stroke="#fff" stroke-width="1"/><path d="M28 3 V27 H3.500" fill="none" stroke="#9a9a9a" stroke-width="1"/><rect x="5" y="4" width="21" height="12" fill="#003000"/><text x="15.5" y="14.3" font-family="Liberation Sans,sans-serif" font-size="12.5" text-anchor="middle" fill="#30ff50" letter-spacing="-.4">01X</text><rect x="5.5" y="20.5" width="3" height="3" fill="#fff" stroke="#000" stroke-width="1"/><rect x="11.0" y="20.5" width="3" height="3" fill="#fff" stroke="#000" stroke-width="1"/><rect x="16.5" y="20.5" width="3" height="3" fill="#fff" stroke="#000" stroke-width="1"/><rect x="22.0" y="20.5" width="3" height="3" fill="#fff" stroke="#000" stroke-width="1"/></svg>
</div>
<div style="left:1245px;top:264.5px;width:31.5px;height:29.5px;background:#d6d3ce;box-shadow:inset -1px -1px 0 #404040,inset 1px 1px 0 #ffffff,inset -2px -2px 0 #808080;"><svg style="left:0px;top:0px;" width="31" height="29.5" viewBox="0 0 31 29.5"><rect x="9" y="3" width="17" height="19" fill="#003038"/><path d="M10 7 h3 v4 h6 v-4 h3 v4 h3" fill="none" stroke="#ff2020" stroke-width="1.2"/><path d="M10 19 v-5 h3 v5 h3 v-5 h3 v5 h3 v-5 h3" fill="none" stroke="#20e8e8" stroke-width="1.2"/><rect x="4.0" y="3.5" width="3" height="3" fill="#fff" stroke="#000" stroke-width="1"/><rect x="4.0" y="8.5" width="3" height="3" fill="#fff" stroke="#000" stroke-width="1"/><rect x="4.0" y="13.5" width="3" height="3" fill="#fff" stroke="#000" stroke-width="1"/><rect x="4.0" y="18.5" width="3" height="3" fill="#fff" stroke="#000" stroke-width="1"/><rect x="4.0" y="23.5" width="3" height="3" fill="#fff" stroke="#000" stroke-width="1"/></svg>
</div>
<div style="left:1245px;top:295.5px;width:31.5px;height:29.5px;background:#d6d3ce;box-shadow:inset -1px -1px 0 #404040,inset 1px 1px 0 #ffffff,inset -2px -2px 0 #808080;"><svg style="left:0px;top:0px;" width="31" height="29.5" viewBox="0 0 31 29.5"><rect x="3.500" y="3" width="24.500" height="24" fill="#dedbd6"/><path d="M3.500 27 V3 H28" fill="none" stroke="#fff" stroke-width="1"/><path d="M28 3 V27 H3.500" fill="none" stroke="#9a9a9a" stroke-width="1"/><rect x="5" y="3.5" width="21" height="14" fill="#003038"/><path d="M8 5.5 v10 l11 -5z" fill="none" stroke="#20e8e8" stroke-width="1.3"/><circle cx="21" cy="10.5" r="1.6" fill="none" stroke="#20e8e8" stroke-width="1.1"/><rect x="5.5" y="21.0" width="3" height="3" fill="#fff" stroke="#000" stroke-width="1"/><rect x="11.0" y="21.0" width="3" height="3" fill="#fff" stroke="#000" stroke-width="1"/><rect x="16.5" y="21.0" width="3" height="3" fill="#fff" stroke="#000" stroke-width="1"/><rect x="22.0" y="21.0" width="3" height="3" fill="#fff" stroke="#000" stroke-width="1"/></svg>
</div>
<div style="left:1245px;top:326.5px;width:31.5px;height:29.5px;background:#d6d3ce;box-shadow:inset -1px -1px 0 #404040,inset 1px 1px 0 #ffffff,inset -2px -2px 0 #808080;"><svg style="left:0px;top:0px;" width="31" height="29.5" viewBox="0 0 31 29.5"><rect x="3.500" y="3" width="24.500" height="24" fill="#dedbd6"/><path d="M3.500 27 V3 H28" fill="none" stroke="#fff" stroke-width="1"/><path d="M28 3 V27 H3.500" fill="none" stroke="#9a9a9a" stroke-width="1"/><rect x="5" y="4" width="21" height="12" fill="#003000"/><text x="15.5" y="13.8" font-family="Liberation Sans,sans-serif" font-size="11" text-anchor="middle" fill="#30ff50" letter-spacing="-.3">0.04</text><path d="M6 22.5 h2 M10 22.5 h2 M14 22.5 h2" stroke="#000" stroke-width="1.6"/><circle cx="22.5" cy="22.5" r="2.6" fill="#fff" stroke="#000" stroke-width="1.3"/></svg>
</div>
<div style="left:31px;top:83.5px;width:82.5px;height:431.5px;background:#d6d3ce;box-shadow:inset -1px -1px 0 #404040,inset 1px 1px 0 #d6d3ce,inset -2px -2px 0 #808080,inset 2px 2px 0 #fff;"></div>
<div style="left:34px;top:87px;width:76px;height:15px;background:linear-gradient(to right,#0a246a,#a6caf0);"></div>
<div class="t" style="left:36.5px;top:87.5px;font-size:11.3px;line-height:14px;color:#fff;font-weight:bold;">Basic (M...</div>
<div style="left:98px;top:89px;width:10px;height:10.5px;background:#d6d3ce;box-shadow:inset -1px -1px 0 #404040,inset 1px 1px 0 #ffffff,inset -2px -2px 0 #808080;"><svg style="left:0px;top:0px;" width="10" height="10.5" viewBox="0 0 10 10.5"><path d="M2.500 2.500 l4.500 5 M7 2.500 l-4.500 5" stroke="#000" stroke-width="1.300"/></svg>
</div>
<div style="left:40.5px;top:106px;width:31px;height:30px;background:#cecbce;box-shadow:inset -1px -1px 0 #404040,inset 1px 1px 0 #ffffff,inset -2px -2px 0 #808080;"><svg style="left:3px;top:2.5px;" width="25" height="25" viewBox="0 0 25 25"><path d="M.500 12.600 h5 M19 12.600 h3.800" stroke="#000" stroke-width="1.200"/><rect x="5.200" y="9.400" width="14" height="6.500" fill="#fff" stroke="#000" stroke-width="1.300"/></svg>
</div>
<div style="left:72.5px;top:106px;width:31px;height:30px;background:#d8d8d8;box-shadow:inset -1px -1px 0 #404040,inset 1px 1px 0 #ffffff,inset -2px -2px 0 #808080;"><div style="left:2.5px;top:2.5px;width:25.5px;height:25px;background:#008484;"><svg style="left:0px;top:0px;" width="25" height="25" viewBox="0 0 25 25"><g transform="translate(1,1)"><path d="M.500 12.600 h5 M19 12.600 h3.800" stroke="#fff" stroke-width="1.200"/><rect x="5.200" y="9.400" width="14" height="6.500" fill="#fff" stroke="#fff" stroke-width="1.300"/></g><path d="M.500 12.600 h5 M19 12.600 h3.800" stroke="#000" stroke-width="1.200"/><rect x="5.200" y="9.400" width="14" height="6.500" fill="#fff" stroke="#000" stroke-width="1.300"/></svg>
</div>
</div>
<div style="left:40.5px;top:137px;width:31px;height:30px;background:#cecbce;box-shadow:inset -1px -1px 0 #404040,inset 1px 1px 0 #ffffff,inset -2px -2px 0 #808080;"><svg style="left:3px;top:2.5px;" width="25" height="25" viewBox="0 0 25 25"><path d="M7 12.700 h4 M14.500 12.700 h4.300" stroke="#000" stroke-width="1.200"/><path d="M10.700 3.200 v18 M14.800 3.200 v18" stroke="#000" stroke-width="1.800"/></svg>
</div>
<div style="left:72.5px;top:137px;width:31px;height:30px;background:#d8d8d8;box-shadow:inset -1px -1px 0 #404040,inset 1px 1px 0 #ffffff,inset -2px -2px 0 #808080;"><div style="left:2.5px;top:2.5px;width:25.5px;height:25px;background:#008484;"><svg style="left:0px;top:0px;" width="25" height="25" viewBox="0 0 25 25"><g transform="translate(1,1)"><path d="M7 12.700 h4 M14.500 12.700 h4.300" stroke="#fff" stroke-width="1.200"/><path d="M10.700 3.200 v18 M14.800 3.200 v18" stroke="#fff" stroke-width="1.800"/></g><path d="M7 12.700 h4 M14.500 12.700 h4.300" stroke="#000" stroke-width="1.200"/><path d="M10.700 3.200 v18 M14.800 3.200 v18" stroke="#000" stroke-width="1.800"/></svg>
</div>
</div>
<div style="left:40.5px;top:168px;width:31px;height:30px;background:#cecbce;box-shadow:inset -1px -1px 0 #404040,inset 1px 1px 0 #ffffff,inset -2px -2px 0 #808080;"><svg style="left:3px;top:2.5px;" width="25" height="25" viewBox="0 0 25 25"><path d="M8.800 3.500 v18.500" stroke="#000" stroke-width="1.800"/><path d="M17 3.500 q-5.500 9.200 0 18.500" fill="none" stroke="#000" stroke-width="1.600"/><path d="M4.500 12.700 h4.300 M14.500 12.700 h5" stroke="#000" stroke-width="1.200"/><path d="M1.300 21 h4 M3.300 19 v4" stroke="#000" stroke-width="1.100"/></svg>
</div>
<div style="left:72.5px;top:168px;width:31px;height:30px;background:#d8d8d8;box-shadow:inset -1px -1px 0 #404040,inset 1px 1px 0 #ffffff,inset -2px -2px 0 #808080;"><div style="left:2.5px;top:2.5px;width:25.5px;height:25px;background:#008484;"><svg style="left:0px;top:0px;" width="25" height="25" viewBox="0 0 25 25"><g transform="translate(1,1)"><path d="M6.500 2.500 h3.500 M8.200 .800 v3.500 M12.500 .800 v3.500 h3 v-3.500" fill="none" stroke="#fff" stroke-width="1"/><path d="M4 6.300 h15.500 M4 9 h15.500" stroke="#fff" stroke-width="1.400"/><path d="M12 9 v3.500 M12 22.500 v2" stroke="#fff" stroke-width="1.100"/><rect x="9.200" y="12.500" width="5.600" height="10" fill="#fff" stroke="#fff" stroke-width="1.200"/></g><path d="M6.500 2.500 h3.500 M8.200 .800 v3.500 M12.500 .800 v3.500 h3 v-3.500" fill="none" stroke="#000" stroke-width="1"/><path d="M4 6.300 h15.500 M4 9 h15.500" stroke="#000" stroke-width="1.400"/><path d="M12 9 v3.500 M12 22.500 v2" stroke="#000" stroke-width="1.100"/><rect x="9.200" y="12.500" width="5.600" height="10" fill="#fff" stroke="#000" stroke-width="1.200"/></svg>
</div>
</div>
<div style="left:40.5px;top:199px;width:31px;height:30px;background:#cecbce;box-shadow:inset -1px -1px 0 #404040,inset 1px 1px 0 #ffffff,inset -2px -2px 0 #808080;"><svg style="left:3px;top:2.5px;" width="25" height="25" viewBox="0 0 25 25"><path d="M0 14 h1.500 q0 -5 2.500 -5 q2.500 0 2.500 5 q0 -5 2.500 -5 q2.500 0 2.500 5 q0 -5 2.500 -5 q2.500 0 2.500 5 q0 -5 2.500 -5 q2.500 0 2.500 5 h1.500" fill="none" stroke="#000" stroke-width="1.200"/></svg>
</div>
<div style="left:72.5px;top:199px;width:31px;height:30px;background:#d8d8d8;box-shadow:inset -1px -1px 0 #404040,inset 1px 1px 0 #ffffff,inset -2px -2px 0 #808080;"><div style="left:2.5px;top:2.5px;width:25.5px;height:25px;background:#008484;"><svg style="left:0px;top:0px;" width="25" height="25" viewBox="0 0 25 25"><g transform="translate(1,1)"><path d="M.500 14 h3 q0 -5 3 -5 q3 0 3 5 q0 -5 3 -5 q3 0 3 5 q0 -5 3 -5 q3 0 3 5 h3" fill="none" stroke="#fff" stroke-width="1.300"/></g><path d="M.500 14 h3 q0 -5 3 -5 q3 0 3 5 q0 -5 3 -5 q3 0 3 5 q0 -5 3 -5 q3 0 3 5 h3" fill="none" stroke="#000" stroke-width="1.300"/></svg>
</div>
</div>
<div style="left:40.5px;top:230px;width:31px;height:30px;background:#cecbce;box-shadow:inset -1px -1px 0 #404040,inset 1px 1px 0 #ffffff,inset -2px -2px 0 #808080;"><svg style="left:3px;top:2.5px;" width="25" height="25" viewBox="0 0 25 25"><path d="M1.300 18 h4 M19.400 18 h2.700" stroke="#000" stroke-width="1.200"/><rect x="5.200" y="14.900" width="14" height="6.300" fill="#fff" stroke="#000" stroke-width="1.300"/><path d="M22 4.800 h-10.700 v9 M7.800 9.500 l3.500 4.500 l3.500 -4.500" fill="none" stroke="#000" stroke-width="1.200"/></svg>
</div>
<div style="left:72.5px;top:230px;width:31px;height:30px;background:#d8d8d8;box-shadow:inset -1px -1px 0 #404040,inset 1px 1px 0 #ffffff,inset -2px -2px 0 #808080;"><div style="left:2.5px;top:2.5px;width:25.5px;height:25px;background:#008484;"><svg style="left:0px;top:0px;" width="25" height="25" viewBox="0 0 25 25"><g transform="translate(1,1)"><path d="M1.300 18 h4 M19.400 18 h2.700" stroke="#fff" stroke-width="1.200"/><rect x="5.200" y="14.900" width="14" height="6.300" fill="#fff" stroke="#fff" stroke-width="1.300"/><path d="M22 4.800 h-10.700 v9 M7.800 9.500 l3.500 4.500 l3.500 -4.500" fill="none" stroke="#fff" stroke-width="1.200"/></g><path d="M1.300 18 h4 M19.400 18 h2.700" stroke="#000" stroke-width="1.200"/><rect x="5.200" y="14.900" width="14" height="6.300" fill="#fff" stroke="#000" stroke-width="1.300"/><path d="M22 4.800 h-10.700 v9 M7.800 9.500 l3.500 4.500 l3.500 -4.500" fill="none" stroke="#000" stroke-width="1.200"/></svg>
</div>
</div>
<div style="left:40.5px;top:261px;width:31px;height:30px;background:#cecbce;box-shadow:inset -1px -1px 0 #404040,inset 1px 1px 0 #ffffff,inset -2px -2px 0 #808080;"><svg style="left:3px;top:2.5px;" width="25" height="25" viewBox="0 0 25 25"><path d="M7 12.700 h4 M14.500 12.700 h4.300" stroke="#000" stroke-width="1.200"/><path d="M10.700 3.200 v19.300 M14.800 3.200 v19.300" stroke="#000" stroke-width="1.800"/><path d="M5 21.300 l17.500 -17 M22.500 4.300 l-5 1 M22.500 4.300 l-1 5" fill="none" stroke="#000" stroke-width="1.200"/></svg>
</div>
<div style="left:72.5px;top:261px;width:31px;height:30px;background:#d8d8d8;box-shadow:inset -1px -1px 0 #404040,inset 1px 1px 0 #ffffff,inset -2px -2px 0 #808080;"><div style="left:2.5px;top:2.5px;width:25.5px;height:25px;background:#008484;"><svg style="left:0px;top:0px;" width="25" height="25" viewBox="0 0 25 25"><g transform="translate(1,1)"><path d="M7 12.700 h4 M14.500 12.700 h4.300" stroke="#fff" stroke-width="1.200"/><path d="M10.700 3.200 v19.300 M14.800 3.200 v19.300" stroke="#fff" stroke-width="1.800"/><path d="M5 21.300 l17.500 -17 M22.500 4.300 l-5 1 M22.500 4.300 l-1 5" fill="none" stroke="#fff" stroke-width="1.200"/></g><path d="M7 12.700 h4 M14.500 12.700 h4.300" stroke="#000" stroke-width="1.200"/><path d="M10.700 3.200 v19.300 M14.800 3.200 v19.300" stroke="#000" stroke-width="1.800"/><path d="M5 21.300 l17.500 -17 M22.500 4.300 l-5 1 M22.500 4.300 l-1 5" fill="none" stroke="#000" stroke-width="1.200"/></svg>
</div>
</div>
<div style="left:40.5px;top:292px;width:31px;height:30px;background:#cecbce;box-shadow:inset -1px -1px 0 #404040,inset 1px 1px 0 #ffffff,inset -2px -2px 0 #808080;"><svg style="left:3px;top:2.5px;" width="25" height="25" viewBox="0 0 25 25"><path d="M0 13 h2.500 q1.500 -4.500 4 -1 q1.500 3 3.500 1 q2 -5 4.500 -1 q1.500 3 3.500 1 q1.500 -3 3 0 h2" fill="none" stroke="#000" stroke-width="1.200"/><path d="M5.600 18.700 l13.800 -14.300 M19.400 4.400 l-4.800 .8 M19.400 4.400 l-.8 4.800" fill="none" stroke="#000" stroke-width="1.200"/></svg>
</div>
<div style="left:72.5px;top:292px;width:31px;height:30px;background:#d8d8d8;box-shadow:inset -1px -1px 0 #404040,inset 1px 1px 0 #ffffff,inset -2px -2px 0 #808080;"><div style="left:2.5px;top:2.5px;width:25.5px;height:25px;background:#008484;"><svg style="left:0px;top:0px;" width="25" height="25" viewBox="0 0 25 25"><g transform="translate(1,1)"><path d="M0 13 h2.500 q1.500 -4.500 4 -1 q1.500 3 3.500 1 q2 -5 4.500 -1 q1.500 3 3.500 1 q1.500 -3 3 0 h2" fill="none" stroke="#fff" stroke-width="1.200"/><path d="M5.600 18.700 l13.800 -14.300 M19.400 4.400 l-4.800 .8 M19.400 4.400 l-.8 4.800" fill="none" stroke="#fff" stroke-width="1.200"/></g><path d="M0 13 h2.500 q1.500 -4.500 4 -1 q1.500 3 3.500 1 q2 -5 4.500 -1 q1.500 3 3.500 1 q1.500 -3 3 0 h2" fill="none" stroke="#000" stroke-width="1.200"/><path d="M5.600 18.700 l13.800 -14.300 M19.400 4.400 l-4.800 .8 M19.400 4.400 l-.8 4.800" fill="none" stroke="#000" stroke-width="1.200"/></svg>
</div>
</div>
<div style="left:40.5px;top:323px;width:31px;height:30px;background:#cecbce;box-shadow:inset -1px -1px 0 #404040,inset 1px 1px 0 #ffffff,inset -2px -2px 0 #808080;"><svg style="left:3px;top:2.5px;" width="25" height="25" viewBox="0 0 25 25"><path d="M11 3 h3 M12.500 3 v3" stroke="#000" stroke-width="1"/><path d="M12.500 7 l2 3 l-2 3 l2 3" fill="none" stroke="#000" stroke-width=".900" stroke-dasharray="2 1.500"/><path d="M4 22 l13 -6" stroke="#000" stroke-width="1.200"/><circle cx="4" cy="22" r="1.100" fill="#fff" stroke="#000" stroke-width=".800"/><circle cx="19.500" cy="17" r="1.100" fill="#fff" stroke="#000" stroke-width=".800"/><circle cx="19.500" cy="22" r="1.100" fill="#fff" stroke="#000" stroke-width=".800"/></svg>
</div>
<div style="left:72.5px;top:323px;width:31px;height:30px;background:#cecbce;box-shadow:inset -1px -1px 0 #404040,inset 1px 1px 0 #ffffff,inset -2px -2px 0 #808080;"><svg style="left:3px;top:2.5px;" width="25" height="25" viewBox="0 0 25 25"><rect x="3.500" y="9.500" width="11" height="6" fill="#fff" stroke="#000" stroke-width="1.200"/><path d="M9 3 v6.500 M9 15.500 v7" stroke="#000" stroke-width="1.100"/><path d="M18.500 2.500 v5 M21.500 2.500 v5 M17.500 6 l1 1.800 l1 -1.800 M20.500 4 l1 -1.800 l1 1.800" fill="none" stroke="#000" stroke-width=".900"/><path d="M14.500 12.500 h4" stroke="#000" stroke-width=".900" stroke-dasharray="1 1"/><path d="M19 10 l3 6 v7" fill="none" stroke="#000" stroke-width="1.100"/></svg>
</div>
<div style="left:40.5px;top:354px;width:31px;height:30px;background:#cecbce;box-shadow:inset -1px -1px 0 #404040,inset 1px 1px 0 #ffffff,inset -2px -2px 0 #808080;"><svg style="left:3px;top:2.5px;" width="25" height="25" viewBox="0 0 25 25"><g transform="translate(-2.500,-2.300) scale(1.200 1.180)"><path d="M3 4.500 h6 q4 0 4 2.700 q0 2.700 -4 2.700 q4 0 4 2.700 q0 2.700 -4 2.700 q4 0 4 2.700 q0 2.700 -4 2.700 h-6" fill="none" stroke="#000" stroke-width="1.100"/><path d="M23 4.500 h-4 q-4 0 -4 2.700 q0 2.700 4 2.700 q-4 0 -4 2.700 q0 2.700 4 2.700 q-4 0 -4 2.700 q0 2.700 4 2.700 h4" fill="none" stroke="#000" stroke-width="1.100"/><path d="M4 8 h3 M5.500 6.500 v3 M19 8 h3 M20.500 6.500 v3" stroke="#000" stroke-width=".900"/></g></svg>
</div>
<div style="left:72.5px;top:354px;width:31px;height:30px;background:#cecbce;box-shadow:inset -1px -1px 0 #404040,inset 1px 1px 0 #ffffff,inset -2px -2px 0 #808080;"><svg style="left:3px;top:2.5px;" width="25" height="25" viewBox="0 0 25 25"><g transform="translate(-2.500,-2.300) scale(1.200 1.180)"><path d="M3 4.500 h5 q4 0 4 2.700 q0 2.700 -4 2.700 q4 0 4 2.700 q0 2.700 -4 2.700 q4 0 4 2.700 q0 2.700 -4 2.700 h-5" fill="none" stroke="#000" stroke-width="1.100"/><path d="M23 4.500 h-3 q-4 0 -4 2.700 q0 2.700 4 2.700 q-4 0 -4 2.700 q0 2.700 4 2.700 q-4 0 -4 2.700 q0 2.700 4 2.700 h3" fill="none" stroke="#000" stroke-width="1.100"/><path d="M5 7 h2 M6 6 v2 M20 7 h2 M21 6 v2" stroke="#000" stroke-width=".900"/></g></svg>
</div>
<div style="left:40.5px;top:385px;width:31px;height:30px;background:#cecbce;box-shadow:inset -1px -1px 0 #404040,inset 1px 1px 0 #ffffff,inset -2px -2px 0 #808080;"><svg style="left:3px;top:2.5px;" width="25" height="25" viewBox="0 0 25 25"><g transform="translate(-2.25,-1.50) scale(1.18 1.12)"><path d="M2 12.500 h4 M19 12.500 h4" stroke="#000" stroke-width="1.100"/><rect x="5.500" y="6.500" width="14" height="12" fill="#fff" stroke="#000" stroke-width="1.300"/><path d="M12 8.500 v8 M14 8.500 v8" stroke="#000" stroke-width="1"/><path d="M8 9 h2.500 M8 11.500 h2.500 M8 14 h2.500 M8 16 h2.500 M15.500 9 h2.500 M15.500 11.500 h2.500 M15.500 14 h2.500 M15.500 16 h2.500" stroke="#000" stroke-width="1"/></g></svg>
</div>
<div style="left:72.5px;top:385px;width:31px;height:30px;background:#cecbce;box-shadow:inset -1px -1px 0 #404040,inset 1px 1px 0 #ffffff,inset -2px -2px 0 #808080;"><svg style="left:3px;top:2.5px;" width="25" height="25" viewBox="0 0 25 25"><g transform="translate(-1.00,-1.00) scale(1.08 1.08)"><path d="M4 3 q-3 1.500 0 3 q-3 1.500 0 3 q-3 1.500 0 3 q-3 1.500 0 3 q-3 1.500 0 3 l2 1.500" fill="none" stroke="#000" stroke-width="1.100"/><path d="M16 4 l8 8.500 l-8 8.500 l-8 -8.500z" fill="#fff" stroke="#000" stroke-width="1.100"/><text x="16" y="15.300" font-family="Liberation Sans,sans-serif" font-weight="bold" font-size="7.500" text-anchor="middle" fill="#000">MF</text></g></svg>
</div>
<div style="left:40.5px;top:416px;width:31px;height:30px;background:#cecbce;box-shadow:inset -1px -1px 0 #404040,inset 1px 1px 0 #ffffff,inset -2px -2px 0 #808080;"><svg style="left:3px;top:2.5px;" width="25" height="25" viewBox="0 0 25 25"><g transform="translate(-1.87,-1.87) scale(1.15 1.15)"><path d="M7 5.500 q0 -2 2 -2 h6 q2 0 2 2 l-1 14 q0 2 -2 2 h-4 q-2 0 -2 -2z" fill="#d8d8d8" stroke="#000" stroke-width="1.200"/><path d="M10 7 v1.500 M10 11 v1.500 M10 15 v1.500 M14 7 v1.500 M14 11 v1.500 M14 15 v1.500 M12 9 v1.500 M12 13 v1.500" stroke="#000" stroke-width="1.400"/></g></svg>
</div>
<div style="left:72.5px;top:416px;width:31px;height:30px;background:#cecbce;box-shadow:inset -1px -1px 0 #404040,inset 1px 1px 0 #ffffff,inset -2px -2px 0 #808080;"><svg style="left:3px;top:2.5px;" width="25" height="25" viewBox="0 0 25 25"><text x="12.500" y="8" font-family="Liberation Sans,sans-serif" font-weight="bold" font-size="8" text-anchor="middle" fill="#000" textLength="25" lengthAdjust="spacingAndGlyphs">SOCKETS</text><rect x="2.500" y="12" width="20" height="7.500" fill="#fff" stroke="#000" stroke-width="1.500"/><path d="M5 10 v2 M8 10 v2 M11 10 v2 M14 10 v2 M17 10 v2 M20 10 v2 M5 19.500 v2 M8 19.500 v2 M11 19.500 v2 M14 19.500 v2 M17 19.500 v2 M20 19.500 v2" stroke="#000" stroke-width="1.300"/><path d="M3 14.500 q2 1.200 0 2.500" fill="none" stroke="#000" stroke-width="1"/></svg>
</div>
<div style="left:40.5px;top:447px;width:31px;height:30px;background:#cecbce;box-shadow:inset -1px -1px 0 #404040,inset 1px 1px 0 #ffffff,inset -2px -2px 0 #808080;"><svg style="left:3px;top:2.5px;" width="25" height="25" viewBox="0 0 25 25"><path d="M3 6.500 h4 M18 6.500 h4" stroke="#000" stroke-width="1.100"/><rect x="6.500" y="4" width="12" height="5" fill="#fff" stroke="#000" stroke-width="1.200"/><path d="M5 14.500 h6 v5 h6" fill="none" stroke="#000" stroke-width="1.800"/><rect x="2.500" y="12.500" width="4" height="4" fill="#a0a0a0" stroke="#000" stroke-width="1"/><rect x="16.500" y="17.500" width="4" height="4" fill="#a0a0a0" stroke="#000" stroke-width="1"/></svg>
</div>
<div style="left:72.5px;top:447px;width:31px;height:30px;background:#cecbce;box-shadow:inset -1px -1px 0 #404040,inset 1px 1px 0 #ffffff,inset -2px -2px 0 #808080;"><svg style="left:3px;top:2.5px;" width="25" height="25" viewBox="0 0 25 25"><path d="M2 12.500 h4 M9.500 12.500 h3" stroke="#000" stroke-width="1.100"/><path d="M6 4 v17 M9.500 4 v17" stroke="#000" stroke-width="1.700"/><path d="M18 5 v16" stroke="#000" stroke-width="1.600"/><rect x="16" y="2.500" width="4" height="4" fill="#fff" stroke="#000" stroke-width="1"/><rect x="14.500" y="9.500" width="7" height="6" fill="#909090" stroke="#000" stroke-width="1"/><rect x="16" y="18.500" width="4" height="4" fill="#fff" stroke="#000" stroke-width="1"/></svg>
</div>
<div style="left:40.5px;top:478px;width:31px;height:30px;background:#cecbce;box-shadow:inset -1px -1px 0 #404040,inset 1px 1px 0 #ffffff,inset -2px -2px 0 #808080;"><svg style="left:3px;top:2.5px;" width="25" height="25" viewBox="0 0 25 25"><g transform="translate(-1.00,-1.00) scale(1.08 1.08)"><rect x="5.500" y="3.500" width="14" height="18" fill="#fff" stroke="#000" stroke-width="1.400"/><path d="M2 6 h3.500 M2 9 h3.500 M2 12 h3.500 M2 15 h3.500 M2 18 h3.500 M19.500 6 h3.500 M19.500 9 h3.500 M19.500 12 h3.500 M19.500 15 h3.500 M19.500 18 h3.500" stroke="#000" stroke-width="1.100"/><rect x="9.500" y="10.500" width="6" height="3.500" fill="#fff" stroke="#000" stroke-width="1"/><path d="M7.500 12.300 h2 M15.500 12.300 h2" stroke="#000" stroke-width="1"/></g></svg>
</div>
<div style="left:840.5px;top:361.5px;width:432.5px;height:392px;background:#d6d3ce;box-shadow:inset -1px -1px 0 #404040,inset 1px 1px 0 #d6d3ce,inset -2px -2px 0 #808080,inset 2px 2px 0 #fff;"></div>
<div style="left:843.5px;top:364.5px;width:426px;height:17.5px;background:linear-gradient(to right,#808080,#c0c0c0);"></div>
<div class="t" style="left:845.5px;top:366.2px;font-size:11.3px;line-height:14px;color:#d6d3ce;font-weight:bold;">Oscilloscope-XSC1</div>
<div style="left:1253px;top:366.5px;width:15.5px;height:13px;background:#d6d3ce;box-shadow:inset -1px -1px 0 #404040,inset 1px 1px 0 #ffffff,inset -2px -2px 0 #808080;"><svg style="left:0px;top:0px;" width="15.5" height="13" viewBox="0 0 15.5 13"><path d="M4 3 L11 10 M11 3 L4 10" stroke="#000" stroke-width="1.700" fill="none"/></svg>
</div>
<div style="left:844.5px;top:384.5px;width:424.5px;height:236.5px;background:#fff;box-shadow:inset 1px 1px 0 #606060,inset -1px -1px 0 #fff;"></div>
<div style="left:843.5px;top:622px;width:426px;height:12px;background:#eceae6;"></div>
<div style="left:843.5px;top:622px;width:14px;height:12px;background:#d6d3ce;box-shadow:inset -1px -1px 0 #404040,inset 1px 1px 0 #ffffff,inset -2px -2px 0 #808080;"><svg style="left:0px;top:0px;" width="14" height="12" viewBox="0 0 14 12"><path d="M8.500 2.500 v7 l-4 -3.500z" fill="#000"/></svg>
</div>
<div style="left:1256.5px;top:622px;width:13px;height:12px;background:#d6d3ce;box-shadow:inset -1px -1px 0 #404040,inset 1px 1px 0 #ffffff,inset -2px -2px 0 #808080;"><svg style="left:0px;top:0px;" width="13" height="12" viewBox="0 0 13 12"><path d="M5 2.500 v7 l4 -3.500z" fill="#000"/></svg>
</div>
<div style="left:1066px;top:622px;width:190.5px;height:12px;background:#d6d3ce;box-shadow:inset -1px -1px 0 #404040,inset 1px 1px 0 #ffffff,inset -2px -2px 0 #808080;"></div>
<div style="left:843.5px;top:637.5px;width:34px;height:39.5px;box-shadow:inset 1px 1px 0 #fff,inset -1px -1px 0 #808080;"></div>
<div style="left:877.5px;top:637.5px;width:63px;height:39.5px;background:#fff;box-shadow:inset 1px 1px 0 #808080;"></div>
<div style="left:942.5px;top:637.5px;width:32px;height:39.5px;box-shadow:inset 1px 1px 0 #fff,inset -1px -1px 0 #808080;"></div>
<div style="left:974.5px;top:637.5px;width:63px;height:39.5px;background:#fff;box-shadow:inset 1px 1px 0 #808080;"></div>
<div style="left:1039.5px;top:637.5px;width:53px;height:39.5px;box-shadow:inset 1px 1px 0 #fff,inset -1px -1px 0 #808080;"></div>
<div style="left:1092.5px;top:637.5px;width:63px;height:39.5px;background:#fff;box-shadow:inset 1px 1px 0 #808080;"></div>
<div class="t" style="left:853.3px;top:639.8px;font-size:9.3px;line-height:12px;color:#000;">T1</div>
<div class="t" style="left:853.3px;top:651.7px;font-size:9.3px;line-height:12px;color:#000;">VA1</div>
<div class="t" style="left:853.3px;top:663.6px;font-size:9.3px;line-height:12px;color:#000;">VB1</div>
<div class="t" style="left:953.3px;top:639.8px;font-size:9.3px;line-height:12px;color:#000;">T2</div>
<div class="t" style="left:953.3px;top:651.7px;font-size:9.3px;line-height:12px;color:#000;">VA2</div>
<div class="t" style="left:953.3px;top:663.6px;font-size:9.3px;line-height:12px;color:#000;">VB2</div>
<div class="t" style="left:1051.5px;top:639.8px;font-size:9.3px;line-height:12px;color:#000;">T2-T1</div>
<div class="t" style="left:1051.5px;top:651.7px;font-size:9.3px;line-height:12px;color:#000;">VA2-VA1</div>
<div class="t" style="left:1051.5px;top:663.6px;font-size:9.3px;line-height:12px;color:#000;">VB2-VB1</div>
<div class="t" style="left:880px;top:639.3px;font-size:9.3px;line-height:12px;color:#000;width:51.5px;text-align:right;">539.8ms</div>
<div class="t" style="left:880px;top:651.3px;font-size:9.3px;line-height:12px;color:#000;width:50.5px;text-align:right;">24.7mV</div>
<div style="left:1173.5px;top:641.3px;width:57.5px;height:14px;background:#d6d3ce;box-shadow:inset -1px -1px 0 #404040,inset 1px 1px 0 #ffffff,inset -2px -2px 0 #808080;"><div class="t" style="left:0px;top:1px;font-size:9.3px;line-height:12px;color:#000;width:57.5px;text-align:center;">Reverse</div>
</div>
<div style="left:1173.5px;top:658px;width:57.5px;height:14.5px;background:#d6d3ce;box-shadow:inset -1px -1px 0 #404040,inset 1px 1px 0 #ffffff,inset -2px -2px 0 #808080;"><div class="t" style="left:0px;top:1.25px;font-size:9.3px;line-height:12px;color:#000;width:57.5px;text-align:center;">Save</div>
</div>
<svg style="left:1248.7px;top:641.8px;" width="14" height="14" viewBox="0 0 14 14"><circle cx="7" cy="7" r="5.500" fill="#d6d3ce" stroke="none"/><path d="M2.800 11.200 A6 6 0 0 1 11.200 2.800" fill="none" stroke="#808080" stroke-width="1.200"/><path d="M11.200 2.800 A6 6 0 0 1 2.800 11.200" fill="none" stroke="#fff" stroke-width="1.200"/><circle cx="7" cy="7" r="2" fill="#808080"/></svg>
<div class="t" style="left:1238.5px;top:658px;font-size:9.3px;line-height:12px;color:#000;">Ground</div>
<div style="left:843.5px;top:686.5px;width:101.5px;height:61.5px;box-shadow:inset 1px 1px 0 #808080,inset -1px -1px 0 #fff,inset 2px 2px 0 #fff,inset -2px -2px 0 #808080;"></div>
<div style="left:851px;top:683.5px;width:42.5px;height:8px;background:#d6d3ce;"></div>
<div class="t" style="left:853px;top:680px;font-size:9.3px;line-height:12px;color:#000;">Timebase</div>
<div style="left:947px;top:686.5px;width:97px;height:61.5px;box-shadow:inset 1px 1px 0 #808080,inset -1px -1px 0 #fff,inset 2px 2px 0 #fff,inset -2px -2px 0 #808080;"></div>
<div style="left:953.5px;top:683.5px;width:46.5px;height:8px;background:#d6d3ce;"></div>
<div class="t" style="left:955.5px;top:680px;font-size:9.3px;line-height:12px;color:#000;">Channel A</div>
<div style="left:1045.5px;top:686.5px;width:99.5px;height:61.5px;box-shadow:inset 1px 1px 0 #808080,inset -1px -1px 0 #fff,inset 2px 2px 0 #fff,inset -2px -2px 0 #808080;"></div>
<div style="left:1051.5px;top:683.5px;width:46.5px;height:8px;background:#d6d3ce;"></div>
<div class="t" style="left:1053.5px;top:680px;font-size:9.3px;line-height:12px;color:#000;">Channel B</div>
<div style="left:1147px;top:686.5px;width:122.8px;height:61.5px;box-shadow:inset 1px 1px 0 #808080,inset -1px -1px 0 #fff,inset 2px 2px 0 #fff,inset -2px -2px 0 #808080;"></div>
<div style="left:1153.5px;top:683.5px;width:31.5px;height:8px;background:#d6d3ce;"></div>
<div class="t" style="left:1155.5px;top:680px;font-size:9.3px;line-height:12px;color:#000;">Trigger</div>
<div class="t" style="left:848.2px;top:697.8px;font-size:9.3px;line-height:12px;color:#000;">Scale</div>
<div style="left:873.5px;top:696px;width:67.5px;height:16px;background:#fff;box-shadow:inset 1px 1px 0 #808080,inset -1px -1px 0 #ffffff,inset 2px 2px 0 #404040,inset -2px -2px 0 #d6d3ce;"><div class="t" style="left:4.5px;top:2px;font-size:9.3px;line-height:12px;color:#000;">20 ms/Div</div>
</div>
<div class="t" style="left:848.2px;top:716.2px;font-size:9.3px;line-height:12px;color:#000;">X position</div>
<div style="left:893.5px;top:714px;width:47.5px;height:16px;background:#fff;box-shadow:inset 1px 1px 0 #808080,inset -1px -1px 0 #ffffff,inset 2px 2px 0 #404040,inset -2px -2px 0 #d6d3ce;"><div class="t" style="left:4.5px;top:2px;font-size:9.3px;line-height:12px;color:#000;">0.0</div>
</div>
<div style="left:846.8px;top:732.8px;width:22.5px;height:14px;background:#eceae6;box-shadow:inset 1px 1px 0 #404040,inset -1px -1px 0 #ffffff,inset 2px 2px 0 #808080;"><div class="t" style="left:0px;top:1.5px;font-size:9.3px;line-height:12px;color:#000;width:22.5px;text-align:center;">Y/T</div>
</div>
<div style="left:871px;top:732.8px;width:22.3px;height:14px;background:#d6d3ce;box-shadow:inset -1px -1px 0 #404040,inset 1px 1px 0 #ffffff,inset -2px -2px 0 #808080;"><div class="t" style="left:0px;top:1px;font-size:9.3px;line-height:12px;color:#000;width:22.3px;text-align:center;">Add</div>
</div>
<div style="left:894.7px;top:732.8px;width:22.1px;height:14px;background:#d6d3ce;box-shadow:inset -1px -1px 0 #404040,inset 1px 1px 0 #ffffff,inset -2px -2px 0 #808080;"><div class="t" style="left:0px;top:1px;font-size:9.3px;line-height:12px;color:#000;width:22.1px;text-align:center;">B/A</div>
</div>
<div style="left:918.2px;top:732.8px;width:22.3px;height:14px;background:#d6d3ce;box-shadow:inset -1px -1px 0 #404040,inset 1px 1px 0 #ffffff,inset -2px -2px 0 #808080;"><div class="t" style="left:0px;top:1px;font-size:9.3px;line-height:12px;color:#000;width:22.3px;text-align:center;">A/B</div>
</div>
<div class="t" style="left:951.4px;top:699px;font-size:9.3px;line-height:12px;color:#000;">Scale</div>
<div style="left:976.5px;top:696px;width:64.5px;height:16px;background:#fff;box-shadow:inset 1px 1px 0 #808080,inset -1px -1px 0 #ffffff,inset 2px 2px 0 #404040,inset -2px -2px 0 #d6d3ce;"><div class="t" style="left:4.5px;top:2px;font-size:9.3px;line-height:12px;color:#000;">200 mV/Div</div>
</div>
<div class="t" style="left:951.4px;top:716.5px;font-size:9.3px;line-height:12px;color:#000;">Y position</div>
<div style="left:994px;top:714px;width:47px;height:16px;background:#fff;box-shadow:inset 1px 1px 0 #808080,inset -1px -1px 0 #ffffff,inset 2px 2px 0 #404040,inset -2px -2px 0 #d6d3ce;"><div class="t" style="left:4px;top:2px;font-size:9.3px;line-height:12px;color:#000;">0.0</div>
</div>
<div style="left:950.8px;top:732.8px;width:19.2px;height:14px;background:#eceae6;box-shadow:inset 1px 1px 0 #404040,inset -1px -1px 0 #ffffff,inset 2px 2px 0 #808080;"><div class="t" style="left:0px;top:1.5px;font-size:9.3px;line-height:12px;color:#000;width:19.2px;text-align:center;">AC</div>
</div>
<div style="left:976.5px;top:732.8px;width:19.3px;height:14px;background:#d6d3ce;box-shadow:inset -1px -1px 0 #404040,inset 1px 1px 0 #ffffff,inset -2px -2px 0 #808080;"><div class="t" style="left:0px;top:1px;font-size:9.3px;line-height:12px;color:#000;width:19.3px;text-align:center;">0</div>
</div>
<div style="left:1001.5px;top:732.8px;width:19.3px;height:14px;background:#d6d3ce;box-shadow:inset -1px -1px 0 #404040,inset 1px 1px 0 #ffffff,inset -2px -2px 0 #808080;"><div class="t" style="left:0px;top:1px;font-size:9.3px;line-height:12px;color:#000;width:19.3px;text-align:center;">DC</div>
</div>
<svg style="left:1027.7px;top:731.8px;" width="14" height="14" viewBox="0 0 14 14"><circle cx="7" cy="7" r="5.500" fill="#d6d3ce" stroke="none"/><path d="M2.800 11.200 A6 6 0 0 1 11.200 2.800" fill="none" stroke="#808080" stroke-width="1.200"/><path d="M11.200 2.800 A6 6 0 0 1 2.800 11.200" fill="none" stroke="#fff" stroke-width="1.200"/><circle cx="7" cy="7" r="2" fill="#808080"/></svg>
<div class="t" style="left:1048.4px;top:699px;font-size:9.3px;line-height:12px;color:#000;">Scale</div>
<div style="left:1076.5px;top:696px;width:64.5px;height:16px;background:#fff;box-shadow:inset 1px 1px 0 #808080,inset -1px -1px 0 #ffffff,inset 2px 2px 0 #404040,inset -2px -2px 0 #d6d3ce;"><div class="t" style="left:4.5px;top:2px;font-size:9.3px;line-height:12px;color:#000;">5 V/Div</div>
</div>
<div class="t" style="left:1048.4px;top:717px;font-size:9.3px;line-height:12px;color:#000;">Y position</div>
<div style="left:1094.7px;top:714px;width:46.5px;height:16px;background:#fff;box-shadow:inset 1px 1px 0 #808080,inset -1px -1px 0 #ffffff,inset 2px 2px 0 #404040,inset -2px -2px 0 #d6d3ce;"><div class="t" style="left:4.5px;top:2px;font-size:9.3px;line-height:12px;color:#000;">0.0</div>
</div>
<div style="left:1049px;top:732.8px;width:19.3px;height:14px;background:#d6d3ce;box-shadow:inset -1px -1px 0 #404040,inset 1px 1px 0 #ffffff,inset -2px -2px 0 #808080;"><div class="t" style="left:0px;top:1px;font-size:9.3px;line-height:12px;color:#000;width:19.3px;text-align:center;">AC</div>
</div>
<div style="left:1069.5px;top:732.8px;width:17.8px;height:14px;background:#d6d3ce;box-shadow:inset -1px -1px 0 #404040,inset 1px 1px 0 #ffffff,inset -2px -2px 0 #808080;"><div class="t" style="left:0px;top:1px;font-size:9.3px;line-height:12px;color:#000;width:17.8px;text-align:center;">0</div>
</div>
<div style="left:1088.3px;top:732.8px;width:19.7px;height:14px;background:#eceae6;box-shadow:inset 1px 1px 0 #404040,inset -1px -1px 0 #ffffff,inset 2px 2px 0 #808080;"><div class="t" style="left:0px;top:1.5px;font-size:9.3px;line-height:12px;color:#000;width:19.7px;text-align:center;">DC</div>
</div>
<div style="left:1109.3px;top:732.8px;width:14.2px;height:14px;background:#d6d3ce;box-shadow:inset -1px -1px 0 #404040,inset 1px 1px 0 #ffffff,inset -2px -2px 0 #808080;"><div class="t" style="left:0px;top:1px;font-size:9.3px;line-height:12px;color:#000;width:14.2px;text-align:center;">-</div>
</div>
<svg style="left:1127.7px;top:731.8px;" width="14" height="14" viewBox="0 0 14 14"><circle cx="7" cy="7" r="5.500" fill="#d6d3ce" stroke="none"/><path d="M2.800 11.200 A6 6 0 0 1 11.200 2.800" fill="none" stroke="#808080" stroke-width="1.200"/><path d="M11.200 2.800 A6 6 0 0 1 2.800 11.200" fill="none" stroke="#fff" stroke-width="1.200"/></svg>
<div class="t" style="left:1151.6px;top:696.8px;font-size:9.3px;line-height:12px;color:#000;">Edge</div>
<div style="left:1184px;top:694.7px;width:20.5px;height:14px;background:#c8c8c8;box-shadow:inset 1px 1px 0 #404040,inset -1px -1px 0 #ffffff,inset 2px 2px 0 #808080;"><svg style="left:0px;top:0px;" width="20.5" height="14" viewBox="0 0 20.5 14"><path d="M5.500 10 h4.500 v-6.500 h4.500 M7.500 7 h5" fill="none" stroke="#000" stroke-width="1.300"/></svg>
</div>
<div style="left:1208px;top:694.7px;width:20.5px;height:14px;background:#c8c8c8;box-shadow:inset -1px -1px 0 #404040,inset 1px 1px 0 #ffffff,inset -2px -2px 0 #808080;"><svg style="left:0px;top:0px;" width="20.5" height="14" viewBox="0 0 20.5 14"><path d="M5 3.500 h4.500 v6.500 h5 M7.500 7 h5" fill="none" stroke="#000" stroke-width="1.300"/></svg>
</div>
<svg style="left:1248.6px;top:692.8px;" width="14" height="14" viewBox="0 0 14 14"><circle cx="7" cy="7" r="5.500" fill="#d6d3ce" stroke="none"/><path d="M2.800 11.200 A6 6 0 0 1 11.200 2.800" fill="none" stroke="#808080" stroke-width="1.200"/><path d="M11.200 2.800 A6 6 0 0 1 2.800 11.200" fill="none" stroke="#fff" stroke-width="1.200"/></svg>
<div class="t" style="left:1151.6px;top:715px;font-size:9.3px;line-height:12px;color:#000;">Level</div>
<div style="left:1183.4px;top:712.5px;width:48.5px;height:16.5px;background:#fff;box-shadow:inset 1px 1px 0 #808080,inset -1px -1px 0 #ffffff,inset 2px 2px 0 #404040,inset -2px -2px 0 #d6d3ce;"><div class="t" style="left:5px;top:2px;font-size:9.3px;line-height:12px;color:#000;">0</div>
</div>
<div style="left:1234px;top:712.5px;width:25px;height:16.5px;background:#fff;"><div class="t" style="left:0px;top:0px;font-size:9.3px;line-height:12px;color:#000;width:25px;text-align:center;">V</div>
</div>
<div style="left:1147.8px;top:732.8px;width:21.8px;height:14px;background:#d6d3ce;box-shadow:inset -1px -1px 0 #404040,inset 1px 1px 0 #ffffff,inset -2px -2px 0 #808080;"><div class="t" style="left:0px;top:1px;font-size:9.3px;line-height:12px;color:#000;width:21.8px;text-align:center;">Sing.</div>
</div>
<div style="left:1169.6px;top:732.8px;width:21.7px;height:14px;background:#d6d3ce;box-shadow:inset -1px -1px 0 #404040,inset 1px 1px 0 #ffffff,inset -2px -2px 0 #808080;"><div class="t" style="left:0px;top:1px;font-size:9.3px;line-height:12px;color:#000;width:21.7px;text-align:center;">Nor.</div>
</div>
<div style="left:1192.5px;top:732.8px;width:22px;height:14px;background:#eceae6;box-shadow:inset 1px 1px 0 #404040,inset -1px -1px 0 #ffffff,inset 2px 2px 0 #808080;"><div class="t" style="left:0px;top:1.5px;font-size:9.3px;line-height:12px;color:#000;width:22px;text-align:center;">Auto</div>
</div>
<div style="left:1221.5px;top:732.8px;width:14.8px;height:14px;background:#eceae6;box-shadow:inset 1px 1px 0 #404040,inset -1px -1px 0 #ffffff,inset 2px 2px 0 #808080;"><div class="t" style="left:0px;top:1.5px;font-size:9.3px;line-height:12px;color:#808080;width:14.8px;text-align:center;text-shadow:1px 1px 0 #fff;">A</div>
</div>
<div style="left:1237px;top:732.8px;width:14.3px;height:14px;background:#d6d3ce;box-shadow:inset -1px -1px 0 #404040,inset 1px 1px 0 #ffffff,inset -2px -2px 0 #808080;"><div class="t" style="left:0px;top:1px;font-size:9.3px;line-height:12px;color:#808080;width:14.3px;text-align:center;text-shadow:1px 1px 0 #fff;">B</div>
</div>
<div style="left:1251.5px;top:732.8px;width:17.8px;height:14px;background:#d6d3ce;box-shadow:inset -1px -1px 0 #404040,inset 1px 1px 0 #ffffff,inset -2px -2px 0 #808080;"><div class="t" style="left:0px;top:1px;font-size:9.3px;line-height:12px;color:#808080;width:17.8px;text-align:center;text-shadow:1px 1px 0 #fff;">Ext</div>
</div>
<svg style="left:0;top:0" width="1280" height="800" viewBox="0 0 1280 800"><rect x="858" y="405.5" width="399" height="203.5" fill="#fff" stroke="#000" stroke-width="1.200"/><path d="M897.45 406.5 V608 M937.4 406.5 V608 M977.35 406.5 V608 M1017.3 406.5 V608 M1057.25 406.5 V608 M1097.2 406.5 V608 M1137.15 406.5 V608 M1177.1 406.5 V608 M1217.05 406.5 V608 M859 439.4 H1256 M859 473.3 H1256 M859 541.1 H1256 M859 575 H1256 " stroke="#c2c2c2" stroke-width="1" stroke-dasharray="3.500 2.500" shape-rendering="crispEdges" fill="none"/><path d="M858 507.5 H1257" stroke="#000" stroke-width="1" shape-rendering="crispEdges"/><path d="M858 504.7 v5 M865.99 505.7 v3 M873.98 505.7 v3 M881.97 505.7 v3 M889.96 505.7 v3 M897.95 504.7 v5 M905.94 505.7 v3 M913.93 505.7 v3 M921.92 505.7 v3 M929.91 505.7 v3 M937.9 504.7 v5 M945.89 505.7 v3 M953.88 505.7 v3 M961.87 505.7 v3 M969.86 505.7 v3 M977.85 504.7 v5 M985.84 505.7 v3 M993.83 505.7 v3 M1001.82 505.7 v3 M1009.81 505.7 v3 M1017.8 504.7 v5 M1025.79 505.7 v3 M1033.78 505.7 v3 M1041.77 505.7 v3 M1049.76 505.7 v3 M1057.75 504.7 v5 M1065.74 505.7 v3 M1073.73 505.7 v3 M1081.72 505.7 v3 M1089.71 505.7 v3 M1097.7 504.7 v5 M1105.69 505.7 v3 M1113.68 505.7 v3 M1121.67 505.7 v3 M1129.66 505.7 v3 M1137.65 504.7 v5 M1145.64 505.7 v3 M1153.63 505.7 v3 M1161.62 505.7 v3 M1169.61 505.7 v3 M1177.6 504.7 v5 M1185.59 505.7 v3 M1193.58 505.7 v3 M1201.57 505.7 v3 M1209.56 505.7 v3 M1217.55 504.7 v5 M1225.54 505.7 v3 M1233.53 505.7 v3 M1241.52 505.7 v3 M1249.51 505.7 v3 M1257.5 504.7 v5 " stroke="#000" stroke-width="1"/><path d="M858.5 489.78 L859.3 486.12 L860.1 482.79 L860.9 479.85 L861.7 477.33 L862.5 475.29 L863.3 473.74 L864.1 472.72 L864.9 472.24 L865.7 472.31 L866.5 472.92 L867.3 474.08 L868.1 475.75 L868.9 477.92 L869.7 480.55 L870.5 483.59 L871.3 487.01 L872.1 490.74 L872.9 494.73 L873.7 498.92 L874.5 503.23 L875.3 507.61 L876.1 511.98 L876.9 516.28 L877.7 520.44 L878.5 524.38 L879.3 528.06 L880.1 531.41 L880.9 534.38 L881.7 536.92 L882.5 539 L883.3 540.58 L884.1 541.63 L884.9 542.15 L885.7 542.11 L886.5 541.53 L887.3 540.41 L888.1 538.77 L888.9 536.63 L889.7 534.03 L890.5 531.01 L891.3 527.62 L892.1 523.9 L892.9 519.93 L893.7 515.75 L894.5 511.44 L895.3 507.06 L896.1 502.69 L896.9 498.38 L897.7 494.22 L898.5 490.26 L899.3 486.56 L900.1 483.19 L900.9 480.19 L901.7 477.62 L902.5 475.51 L903.3 473.9 L904.1 472.82 L904.9 472.27 L905.7 472.27 L906.5 472.82 L907.3 473.9 L908.1 475.51 L908.9 477.62 L909.7 480.19 L910.5 483.19 L911.3 486.56 L912.1 490.26 L912.9 494.22 L913.7 498.38 L914.5 502.69 L915.3 507.06 L916.1 511.44 L916.9 515.75 L917.7 519.93 L918.5 523.9 L919.3 527.62 L920.1 531.01 L920.9 534.03 L921.7 536.63 L922.5 538.77 L923.3 540.41 L924.1 541.53 L924.9 542.11 L925.7 542.15 L926.5 541.63 L927.3 540.58 L928.1 539 L928.9 536.92 L929.7 534.38 L930.5 531.41 L931.3 528.06 L932.1 524.38 L932.9 520.44 L933.7 516.28 L934.5 511.98 L935.3 507.61 L936.1 503.23 L936.9 498.92 L937.7 494.73 L938.5 490.74 L939.3 487.01 L940.1 483.59 L940.9 480.55 L941.7 477.92 L942.5 475.75 L943.3 474.08 L944.1 472.92 L944.9 472.31 L945.7 472.24 L946.5 472.72 L947.3 473.74 L948.1 475.29 L948.9 477.33 L949.7 479.85 L950.5 482.79 L951.3 486.12 L952.1 489.78 L952.9 493.71 L953.7 497.85 L954.5 502.14 L955.3 506.51 L956.1 510.89 L956.9 515.22 L957.7 519.41 L958.5 523.42 L959.3 527.17 L960.1 530.61 L960.9 533.68 L961.7 536.33 L962.5 538.53 L963.3 540.23 L964.1 541.42 L964.9 542.07 L965.7 542.17 L966.5 541.73 L967.3 540.74 L968.1 539.23 L968.9 537.21 L969.7 534.72 L970.5 531.8 L971.3 528.5 L972.1 524.86 L972.9 520.94 L973.7 516.81 L974.5 512.53 L975.3 508.16 L976.1 503.78 L976.9 499.45 L977.7 495.24 L978.5 491.22 L979.3 487.46 L980.1 484 L980.9 480.9 L981.7 478.22 L982.5 476 L983.3 474.26 L984.1 473.04 L984.9 472.35 L985.7 472.22 L986.5 472.63 L987.3 473.58 L988.1 475.06 L988.9 477.05 L989.7 479.51 L990.5 482.4 L991.3 485.69 L992.1 489.31 L992.9 493.21 L993.7 497.33 L994.5 501.6 L995.3 505.97 L996.1 510.35 L996.9 514.68 L997.7 518.9 L998.5 522.93 L999.3 526.72 L1000.1 530.2 L1000.9 533.31 L1001.7 536.02 L1002.5 538.28 L1003.3 540.05 L1004.1 541.3 L1004.9 542.02 L1005.7 542.19 L1006.5 541.81 L1007.3 540.89 L1008.1 539.44 L1008.9 537.49 L1009.7 535.06 L1010.5 532.19 L1011.3 528.93 L1012.1 525.33 L1012.9 521.44 L1013.7 517.34 L1014.5 513.07 L1015.3 508.71 L1016.1 504.32 L1016.9 499.99 L1017.7 495.76 L1018.5 491.71 L1019.3 487.91 L1020.1 484.41 L1020.9 481.27 L1021.7 478.53 L1022.5 476.25 L1023.3 474.45 L1024.1 473.16 L1024.9 472.41 L1025.7 472.2 L1026.5 472.55 L1027.3 473.43 L1028.1 474.85 L1028.9 476.78 L1029.7 479.18 L1030.5 482.02 L1031.3 485.26 L1032.1 488.84 L1032.9 492.71 L1033.7 496.8 L1034.5 501.06 L1035.3 505.42 L1036.1 509.8 L1036.9 514.15 L1037.7 518.38 L1038.5 522.44 L1039.3 526.26 L1040.1 529.78 L1040.9 532.95 L1041.7 535.71 L1042.5 538.02 L1043.3 539.85 L1044.1 541.17 L1044.9 541.96 L1045.7 542.2 L1046.5 541.89 L1047.3 541.04 L1048.1 539.65 L1048.9 537.76 L1049.7 535.39 L1050.5 532.57 L1051.3 529.36 L1052.1 525.8 L1052.9 521.94 L1053.7 517.86 L1054.5 513.61 L1055.3 509.26 L1056.1 504.87 L1056.9 500.52 L1057.7 496.28 L1058.5 492.21 L1059.3 488.37 L1060.1 484.83 L1060.9 481.64 L1061.7 478.85 L1062.5 476.51 L1063.3 474.65 L1064.1 473.29 L1064.9 472.47 L1065.7 472.2 L1066.5 472.47 L1067.3 473.29 L1068.1 474.65 L1068.9 476.51 L1069.7 478.85 L1070.5 481.64 L1071.3 484.83 L1072.1 488.37 L1072.9 492.21 L1073.7 496.28 L1074.5 500.52 L1075.3 504.87 L1076.1 509.26 L1076.9 513.61 L1077.7 517.86 L1078.5 521.94 L1079.3 525.8 L1080.1 529.36 L1080.9 532.57 L1081.7 535.39 L1082.5 537.76 L1083.3 539.65 L1084.1 541.04 L1084.9 541.89 L1085.7 542.2 L1086.5 541.96 L1087.3 541.17 L1088.1 539.85 L1088.9 538.02 L1089.7 535.71 L1090.5 532.95 L1091.3 529.78 L1092.1 526.26 L1092.9 522.44 L1093.7 518.38 L1094.5 514.15 L1095.3 509.8 L1096.1 505.42 L1096.9 501.06 L1097.7 496.8 L1098.5 492.71 L1099.3 488.84 L1100.1 485.26 L1100.9 482.02 L1101.7 479.18 L1102.5 476.78 L1103.3 474.85 L1104.1 473.43 L1104.9 472.55 L1105.7 472.2 L1106.5 472.41 L1107.3 473.16 L1108.1 474.45 L1108.9 476.25 L1109.7 478.53 L1110.5 481.27 L1111.3 484.41 L1112.1 487.91 L1112.9 491.71 L1113.7 495.76 L1114.5 499.99 L1115.3 504.32 L1116.1 508.71 L1116.9 513.07 L1117.7 517.34 L1118.5 521.44 L1119.3 525.33 L1120.1 528.93 L1120.9 532.19 L1121.7 535.06 L1122.5 537.49 L1123.3 539.44 L1124.1 540.89 L1124.9 541.81 L1125.7 542.19 L1126.5 542.02 L1127.3 541.3 L1128.1 540.05 L1128.9 538.28 L1129.7 536.02 L1130.5 533.31 L1131.3 530.2 L1132.1 526.72 L1132.9 522.93 L1133.7 518.9 L1134.5 514.68 L1135.3 510.35 L1136.1 505.97 L1136.9 501.6 L1137.7 497.33 L1138.5 493.21 L1139.3 489.31 L1140.1 485.69 L1140.9 482.4 L1141.7 479.51 L1142.5 477.05 L1143.3 475.06 L1144.1 473.58 L1144.9 472.63 L1145.7 472.22 L1146.5 472.35 L1147.3 473.04 L1148.1 474.26 L1148.9 476 L1149.7 478.22 L1150.5 480.9 L1151.3 484 L1152.1 487.46 L1152.9 491.22 L1153.7 495.24 L1154.5 499.45 L1155.3 503.78 L1156.1 508.16 L1156.9 512.53 L1157.7 516.81 L1158.5 520.94 L1159.3 524.86" fill="none" stroke="#000" stroke-width="1.150"/><path d="M858 405 V609" stroke="#e01010" stroke-width="1.800"/><path d="M852 399 h12.500 l-6.250 6.500z" fill="#e01010"/><rect x="857.500" y="400" width="1.200" height="3" fill="#fff"/><path d="M1257 405 V609" stroke="#000090" stroke-width="2"/><path d="M1250.500 399 h12.500 l-6.250 6.500z" fill="#0000c0"/><rect x="1256" y="400" width="2" height="2.500" fill="#fff"/></svg>
<div style="left:0px;top:753px;width:1280px;height:16px;background:#d6d3ce;"></div>
<div style="left:38px;top:754px;width:675px;height:14px;box-shadow:inset 1px 1px 0 #808080,inset -1px -1px 0 #fff;"></div>
<div style="left:717px;top:754px;width:96px;height:14px;box-shadow:inset 1px 1px 0 #808080,inset -1px -1px 0 #fff;"></div>
<div style="left:817px;top:754px;width:35px;height:14px;box-shadow:inset 1px 1px 0 #808080,inset -1px -1px 0 #fff;"></div>
<div style="left:855px;top:754px;width:146px;height:14px;box-shadow:inset 1px 1px 0 #808080,inset -1px -1px 0 #fff;"></div>
<div style="left:1004px;top:754px;width:174px;height:14px;box-shadow:inset 1px 1px 0 #808080,inset -1px -1px 0 #fff;"></div>
<div style="left:1181px;top:754px;width:27px;height:14px;box-shadow:inset 1px 1px 0 #808080,inset -1px -1px 0 #fff;"></div>
<div style="left:1211px;top:754px;width:28px;height:14px;box-shadow:inset 1px 1px 0 #808080,inset -1px -1px 0 #fff;"></div>
<div style="left:1243px;top:754px;width:24px;height:14px;box-shadow:inset 1px 1px 0 #808080,inset -1px -1px 0 #fff;"></div>
<div class="t" style="left:39.5px;top:754.3px;font-size:11.3px;line-height:14px;color:#000;">Ready</div>
<div class="t" style="left:720px;top:754.3px;font-size:11.3px;line-height:14px;color:#000;">Tran: 0.691 s</div>
<div class="t" style="left:1006px;top:754.3px;font-size:11px;line-height:14px;color:#000;">OnKeyDown( 16d )</div>
<div style="left:0px;top:769px;width:1280px;height:31px;background:#d6d3ce;box-shadow:inset 0 1px 0 #d6d3ce,inset 0 2px 0 #fff;"></div>
<div style="left:2px;top:774px;width:52px;height:22px;background:#d6d3ce;box-shadow:inset -1px -1px 0 #404040,inset 1px 1px 0 #ffffff,inset -2px -2px 0 #808080;"><svg style="left:2px;top:1.5px;" width="19" height="19" viewBox="0 0 19 19"><g transform="scale(1.150)"><path d="M2 4 q3 -2 6 0 l-1 5 q-3 -2 -6 0z" fill="#e85020"/><path d="M9 4.3 q3 2 6.5 0 l-1 5 q-3.5 2 -6.5 0z" fill="#50b030"/><path d="M.8 10 q3 -2 6 0 l-1 5 q-3 -2 -6 0z" fill="#3070e0"/><path d="M7.8 10.3 q3 2 6.5 0 l-1 5 q-3.5 2 -6.5 0z" fill="#f0c020"/></g></svg>
<div class="t" style="left:21.5px;top:4px;font-size:12px;line-height:14px;color:#000;font-weight:bold;letter-spacing:0.2px;">Start</div>
</div>
<div style="left:60.5px;top:774px;width:2px;height:22px;box-shadow:inset 1px 0 0 #808080,inset -1px 0 0 #fff;"></div>
<div style="left:63.5px;top:775px;width:2px;height:20px;box-shadow:inset 1px 1px 0 #fff,inset -1px -1px 0 #808080;"></div>
<svg style="left:70px;top:777px;" width="16" height="16" viewBox="0 0 16 16"><path d="M2 3 h9 l3 2 v8 h-12z" fill="#e8f4ff" stroke="#2060c0" stroke-width="1.300"/><path d="M5 6 q4 -2 6 1 q-1 4 -5 4 q-2 -2 -1 -5z" fill="#fff" stroke="#1850a8" stroke-width="1.200"/><path d="M7 10 l4 -4" stroke="#103880" stroke-width="1.200"/></svg>
<svg style="left:94px;top:777px;" width="16" height="16" viewBox="0 0 16 16"><rect x="0" y="1" width="16" height="14" fill="#0a2a80"/><rect x="0" y="9" width="16" height="6" fill="#1848b8"/><text x="8" y="7.500" font-family="Liberation Sans,sans-serif" font-weight="bold" font-size="6.500" text-anchor="middle" fill="#fff">DEV</text><path d="M3 12 h10" stroke="#60a0ff" stroke-width="1.500"/></svg>
<svg style="left:116px;top:777px;" width="16" height="16" viewBox="0 0 16 16"><rect x="2" y="4" width="11" height="10" fill="#dce8ff" stroke="#2858b0" stroke-width="1"/><path d="M1 8 l4 -4 v2.500 h4 v3 h-4 v2.500z" fill="#3078d8" stroke="#103880" stroke-width=".600"/><path d="M15 5 l-4 -3.500 v2 h-3 v3 h3 v2z" fill="#58a0f0" stroke="#103880" stroke-width=".600"/></svg>
<svg style="left:139.5px;top:777px;" width="16" height="16" viewBox="0 0 16 16"><circle cx="8" cy="8.500" r="5.500" fill="none" stroke="#2888e8" stroke-width="2.600"/><path d="M3 9 h10" stroke="#2888e8" stroke-width="2.200"/><rect x="9" y="10" width="6" height="3" fill="#d6d3ce"/><path d="M1 12 q-1 -7 12 -10" fill="none" stroke="#58b0f8" stroke-width="1.300"/></svg>
<svg style="left:163px;top:777px;" width="16" height="16" viewBox="0 0 16 16"><circle cx="8" cy="8" r="7" fill="#e8701a"/><circle cx="8.6" cy="7" r="4.2" fill="#3a5ec0"/><path d="M1.5 6 q2 -4 6 -4.5 q-3 2.5 -1 5 q2 1.5 4 1 q-1 3.5 -5 3 q-3 -.5 -4 -4.500z" fill="#f0a020"/><circle cx="8" cy="8" r="7" fill="none" stroke="#a04008" stroke-width=".8"/></svg>
<svg style="left:185px;top:777px;" width="16" height="16" viewBox="0 0 16 16"><rect x="4" y="1" width="9" height="14" fill="#b8c8f0" stroke="#6080c8" stroke-width=".800"/><rect x="5.500" y="2.500" width="6" height="3" fill="#e8f0ff"/><path d="M5.500 7.500 h6 M5.500 9.500 h6 M5.500 11.500 h6 M5.500 13.500 h6" stroke="#5070c0" stroke-width="1" stroke-dasharray="1.300 1"/></svg>
<svg style="left:209px;top:777px;" width="16" height="16" viewBox="0 0 16 16"><rect x="4" y="2" width="11" height="10" fill="#f0f4ff" stroke="#3858a8" stroke-width="1"/><rect x="4" y="2" width="11" height="2.500" fill="#2848a0"/><path d="M6 7 h7 M6 9 h7" stroke="#8098d0" stroke-width="1"/><path d="M1 15 l5 -7" stroke="#c08020" stroke-width="1.800"/><rect x="1" y="3" width="3" height="3" fill="#2848a0"/></svg>
<svg style="left:232px;top:777px;" width="16" height="16" viewBox="0 0 16 16"><circle cx="8" cy="8" r="7" fill="#284090" stroke="#b0b8c8" stroke-width="1.500"/><circle cx="8" cy="8" r="4.200" fill="#e8ecf8"/><path d="M6.500 5.500 l4.500 2.500 l-4.500 2.500z" fill="#2040a0"/></svg>
<div style="left:302.5px;top:774px;width:2px;height:22px;box-shadow:inset 1px 0 0 #808080,inset -1px 0 0 #fff;"></div>
<div style="left:308.5px;top:774px;width:115px;height:22px;background:#d6d3ce;box-shadow:inset -1px -1px 0 #404040,inset 1px 1px 0 #ffffff,inset -2px -2px 0 #808080;"><svg style="left:5px;top:3px;" width="16" height="16" viewBox="0 0 16 16"><circle cx="8" cy="8" r="7" fill="#e8701a"/><circle cx="8.6" cy="7" r="4.2" fill="#3a5ec0"/><path d="M1.5 6 q2 -4 6 -4.5 q-3 2.5 -1 5 q2 1.5 4 1 q-1 3.5 -5 3 q-3 -.5 -4 -4.500z" fill="#f0a020"/><circle cx="8" cy="8" r="7" fill="none" stroke="#a04008" stroke-width=".8"/></svg>
<div class="t" style="left:25px;top:4px;font-size:11.2px;line-height:14px;color:#000;letter-spacing:-0.15px;">Circuits Online ...</div>
</div>
<div style="left:425.5px;top:774px;width:115px;height:22px;background:#d6d3ce;box-shadow:inset -1px -1px 0 #404040,inset 1px 1px 0 #ffffff,inset -2px -2px 0 #808080;"><svg style="left:5px;top:3px;" width="16" height="16" viewBox="0 0 16 16"><circle cx="8" cy="8" r="7" fill="#e8701a"/><circle cx="8.6" cy="7" r="4.2" fill="#3a5ec0"/><path d="M1.5 6 q2 -4 6 -4.5 q-3 2.5 -1 5 q2 1.5 4 1 q-1 3.5 -5 3 q-3 -.5 -4 -4.500z" fill="#f0a020"/><circle cx="8" cy="8" r="7" fill="none" stroke="#a04008" stroke-width=".8"/></svg>
<div class="t" style="left:25px;top:4px;font-size:11.2px;line-height:14px;color:#000;letter-spacing:-0.15px;">Upload Archief ...</div>
</div>
<div style="left:542.5px;top:774px;width:115px;height:22px;background:#d6d3ce;box-shadow:inset -1px -1px 0 #404040,inset 1px 1px 0 #ffffff,inset -2px -2px 0 #808080;"><svg style="left:5px;top:3px;" width="16" height="16" viewBox="0 0 16 16"><circle cx="8" cy="8" r="7" fill="#e8701a"/><circle cx="8.6" cy="7" r="4.2" fill="#3a5ec0"/><path d="M1.5 6 q2 -4 6 -4.5 q-3 2.5 -1 5 q2 1.5 4 1 q-1 3.5 -5 3 q-3 -.5 -4 -4.500z" fill="#f0a020"/><circle cx="8" cy="8" r="7" fill="none" stroke="#a04008" stroke-width=".8"/></svg>
<div class="t" style="left:25px;top:4px;font-size:11.2px;line-height:14px;color:#000;letter-spacing:-0.15px;">download.do (J...</div>
</div>
<div style="left:659.5px;top:774px;width:115px;height:22px;background:#d6d3ce;box-shadow:inset -1px -1px 0 #404040,inset 1px 1px 0 #ffffff,inset -2px -2px 0 #808080;"><svg style="left:5px;top:3px;" width="16" height="16" viewBox="0 0 16 16"><path d="M1.5 13.5 v-9 q0 -1 1 -1 h3 l1.5 1.5 h6 q1 0 1 1 v7.500z" fill="#f8e080" stroke="#a08020" stroke-width=".9"/><path d="M1.500 7 h13" stroke="#fff8c0" stroke-width="1"/></svg>
<div class="t" style="left:25px;top:4px;font-size:11.2px;line-height:14px;color:#000;letter-spacing:-0.15px;">multisim</div>
</div>
<div style="left:776.5px;top:774px;width:115px;height:22px;background:#f0eeea;box-shadow:inset 1px 1px 0 #404040,inset -1px -1px 0 #ffffff,inset 2px 2px 0 #808080;"><svg style="left:5px;top:3px;" width="16" height="16" viewBox="0 0 16 16"><path d="M1 9 L8 5 L16 8 L9 12z" fill="#6a5acd" stroke="#1a1a60" stroke-width=".7"/><path d="M1 7 L8 3 L16 6 L9 10z" fill="#8fa8e8" stroke="#1a1a60" stroke-width=".7"/><path d="M1 11 L8 7 L16 10 L9 14z" fill="none" stroke="#303070" stroke-width=".7"/><path d="M3 7.5 L9 9.6 M5 6.2 L11 8.4 M7 5 L13 7.2" stroke="#fff" stroke-width=".6"/><circle cx="3" cy="4" r="1.2" fill="#c03030"/></svg>
<div class="t" style="left:25px;top:4px;font-size:11.2px;line-height:14px;color:#000;font-weight:bold;letter-spacing:-0.15px;">Multisim - [co...</div>
</div>
<div style="left:894px;top:774px;width:115px;height:22px;background:#d6d3ce;box-shadow:inset -1px -1px 0 #404040,inset 1px 1px 0 #ffffff,inset -2px -2px 0 #808080;"><svg style="left:5px;top:3px;" width="16" height="16" viewBox="0 0 16 16"><rect x="1.500" y="3.500" width="10" height="9" fill="#f0f4ff" stroke="#2050b0" stroke-width="1"/><path d="M1.500 3.500 l5 4.500 l5 -4.500" fill="none" stroke="#2050b0" stroke-width="1"/><path d="M8 9 q4 -5 7 0 l-2.500 0 q-1.500 3 -4.500 2.500 l1.500 -2.500z" fill="#3080e0" stroke="#104090" stroke-width=".7"/><path d="M9 1.500 l5 0 l0 4" fill="none" stroke="#e0a020" stroke-width="1.400"/></svg>
<div class="t" style="left:25px;top:4px;font-size:11.2px;line-height:14px;color:#000;letter-spacing:-0.15px;">Postvak IN - O...</div>
</div>
<div style="left:1011px;top:774px;width:115px;height:22px;background:#d6d3ce;box-shadow:inset -1px -1px 0 #404040,inset 1px 1px 0 #ffffff,inset -2px -2px 0 #808080;"><svg style="left:5px;top:3px;" width="16" height="16" viewBox="0 0 16 16"><path d="M1.500 6.500 l6.500 -4 l6.500 4 v7 h-13z" fill="#fff" stroke="#404040" stroke-width="1"/><path d="M1.500 6.500 l6.500 4 l6.500 -4" fill="none" stroke="#404040" stroke-width="1"/></svg>
<div class="t" style="left:25px;top:4px;font-size:11.2px;line-height:14px;color:#000;letter-spacing:-0.15px;">Registratie bij h...</div>
</div>
<div style="left:1135.5px;top:774px;width:2px;height:22px;box-shadow:inset 1px 0 0 #808080,inset -1px 0 0 #fff;"></div>
<div style="left:1160px;top:774px;width:118px;height:22px;box-shadow:inset 1px 1px 0 #808080,inset -1px -1px 0 #fff;"></div>
<svg style="left:1163px;top:777px;" width="16" height="16" viewBox="0 0 16 16"><rect x="2" y="2" width="10" height="8" fill="#fff" stroke="#102080" stroke-width="1.200"/><rect x="2" y="2" width="10" height="2.500" fill="#2040c0"/><rect x="1" y="9" width="5" height="5" fill="#fff" stroke="#000" stroke-width="1"/><path d="M2 9 v-2 q1.500 -1.500 3 0 v2" fill="none" stroke="#000" stroke-width="1"/></svg>
<svg style="left:1180.5px;top:777px;" width="16" height="16" viewBox="0 0 16 16"><circle cx="6" cy="6" r="4.500" fill="#a0a8b0" stroke="#505860" stroke-width="1"/><path d="M9 9 l5 5 M11 7 l3 3" stroke="#404850" stroke-width="1.600"/><circle cx="6" cy="6" r="2" fill="#d8e0e8"/></svg>
<svg style="left:1199.5px;top:777px;" width="16" height="16" viewBox="0 0 16 16"><path d="M2 2 h12 v6 q-1 5 -6 7 q-5 -2 -6 -7z" fill="#fff" stroke="#101860" stroke-width="1.300"/><path d="M4.500 4 h7 v4 q-.500 3 -3.500 4.500 q-3 -1.500 -3.500 -4.500z" fill="#203090"/></svg>
<svg style="left:1219px;top:777px;" width="16" height="16" viewBox="0 0 16 16"><rect x="1" y="2" width="7" height="6" fill="#10a030"/><rect x="8" y="2" width="7" height="6" fill="#000"/><rect x="1" y="8" width="7" height="6" fill="#f0e010"/><rect x="8" y="8" width="7" height="6" fill="#e02010"/></svg>
<div class="t" style="left:1243px;top:778px;font-size:11.3px;line-height:14px;color:#000;">16:23</div>
</body></html>
